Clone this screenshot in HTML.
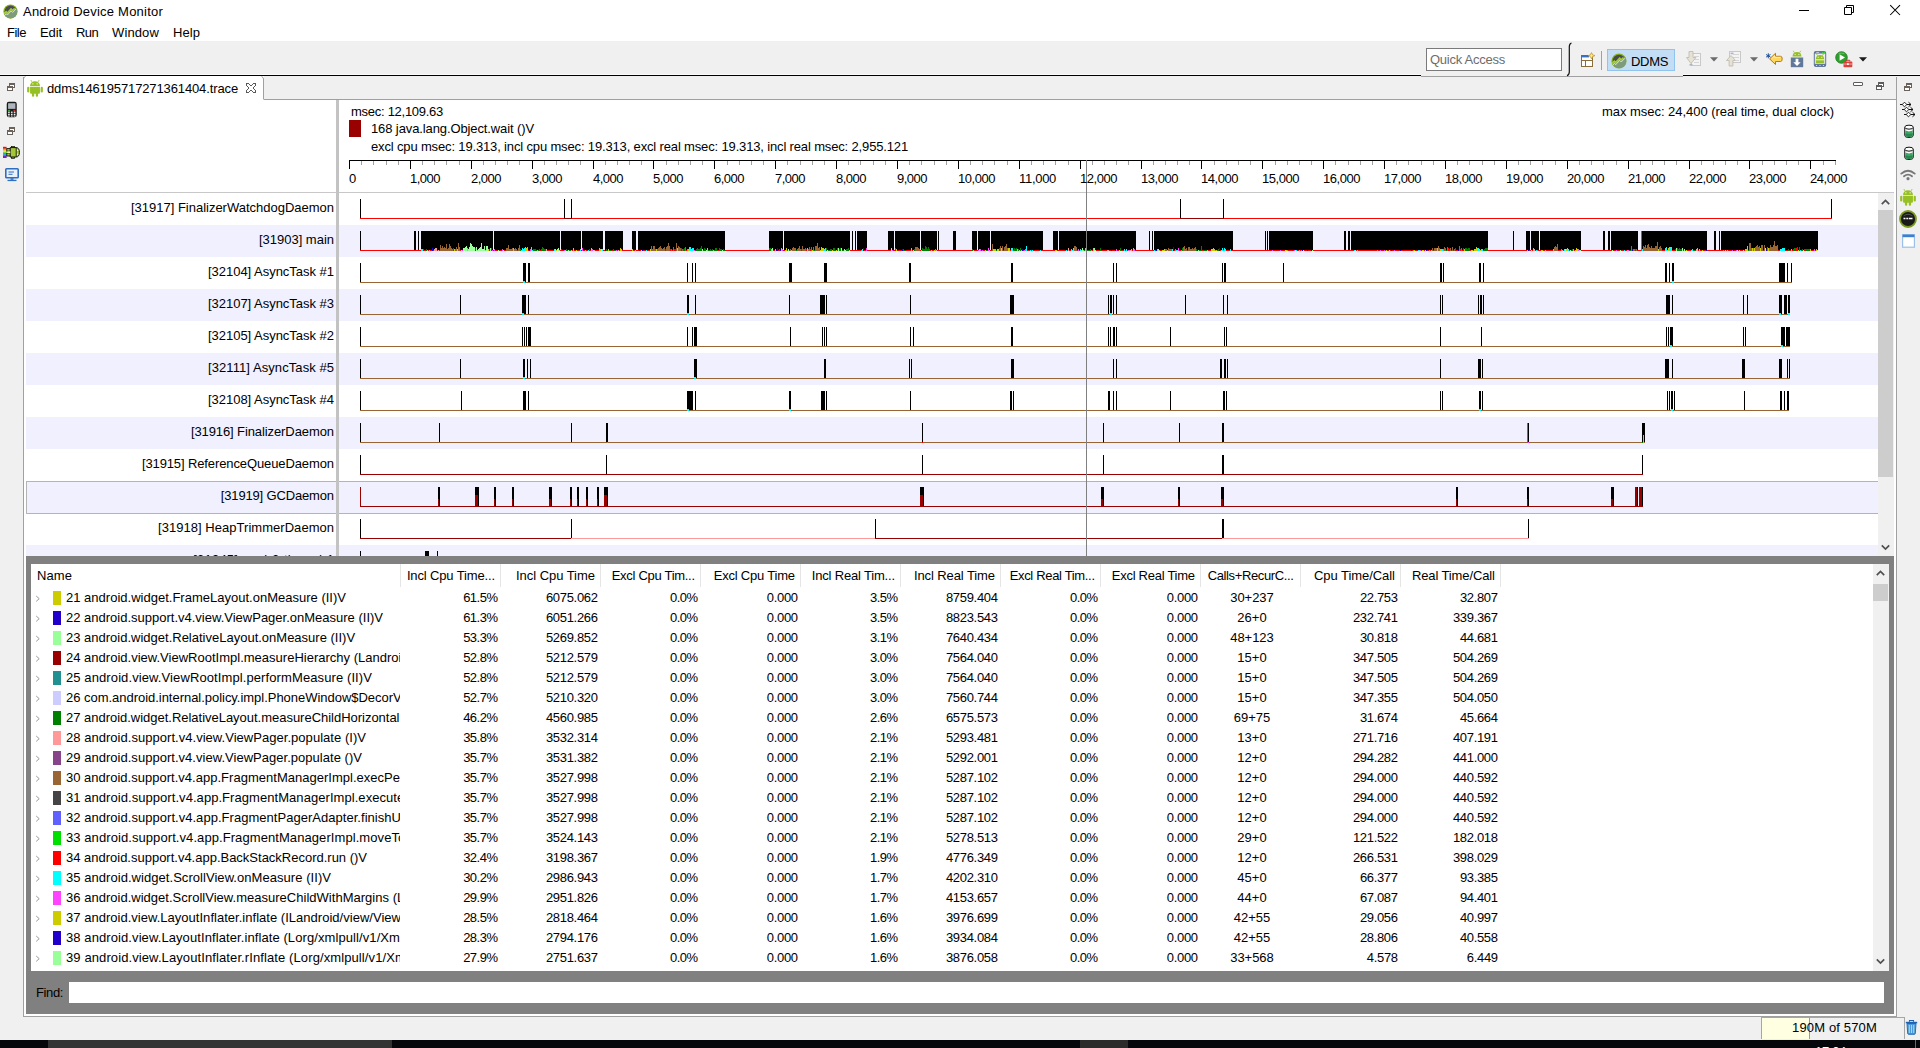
<!DOCTYPE html><html lang="en"><head><meta charset="utf-8"><title>Android Device Monitor</title><style>

html,body{margin:0;padding:0;background:#fff;}
body{width:1920px;height:1048px;overflow:hidden;position:relative;font-family:"Liberation Sans",sans-serif;font-size:13px;line-height:16px;color:#000;}
#app,#app>section{position:absolute;left:0;top:0;width:1920px;height:1048px;overflow:hidden;}
#app>section>div,#app>section>svg,#app>section>span,#labclip>span{position:absolute;}
.t{white-space:pre;display:block;}

</style></head><body><div id="app">
<section id="chrome" aria-label="window background">
<div style="left:0px;top:41px;width:1920px;height:36px;background:#f0f0f0;"></div>
<div style="left:0px;top:77px;width:1920px;height:23px;background:#f0f0f0;"></div>
<div style="left:0px;top:77px;width:24px;height:963px;background:#f0f0f0;"></div>
<div style="left:1897px;top:77px;width:23px;height:963px;background:#f0f0f0;"></div>
<div style="left:0px;top:1017px;width:1920px;height:23px;background:#f0f0f0;"></div>
<div style="left:0px;top:75px;width:1421px;height:1px;background:#000;"></div>
<div style="left:1683px;top:75px;width:237px;height:1px;background:#000;"></div>


</section>
<section id="titlebar" aria-label="title bar">

<svg style="left:3px;top:4px" width="15" height="15" viewBox="0 0 16 16" ><defs><clipPath id="c3"><circle cx="8" cy="8" r="7.2"/></clipPath></defs><circle cx="8" cy="8" r="7.6" fill="#86b01c"/><g clip-path="url(#c3)"><circle cx="8" cy="8" r="6.3" fill="#4a4a50"/><path d="M0 11.5 L3.3 8.2 L4.6 9.6 L8.6 5.2 L10.2 6.9 L16 1.5 L16 16 L0 16Z" fill="#7e9c7c"/><path d="M0.5 11.2 L3.3 8.2 L4.6 9.6 L8.6 5.2 L10.2 6.9 L12.5 4.6" fill="none" stroke="#a4cc39" stroke-width="1.7"/><path d="M1.5 12.6 L3.4 10.4 L4.7 11.7 L8.6 7.4 L10.2 9.0 L14 5.2" fill="none" stroke="#e9f0e6" stroke-width="0.8"/></g></svg>
<svg style="left:1799px;top:10px" width="10" height="1" viewBox="0 0 10 1" ><rect width="10" height="1" fill="#000"/></svg>
<svg style="left:1843px;top:4px" width="12" height="12" viewBox="0 0 12 12" ><path d="M3.5 3.5V1.5H10.5V8.5H8.5M1.5 3.5H8.5V10.5H1.5Z" fill="none" stroke="#000" stroke-width="1"/></svg>
<svg style="left:1889px;top:4px" width="13" height="13" viewBox="0 0 13 13" ><path d="M1.200 1.200L11 11M11 1.200L1.200 11" fill="none" stroke="#000" stroke-width="1.050"/></svg>
<span class="t" style="top:4px;left:23px;letter-spacing:0.222px;">Android Device Monitor</span>
</section>
<section id="menubar" aria-label="menu bar">


<span class="t" style="top:25px;left:7px;letter-spacing:-0.488px;">File</span>
<span class="t" style="top:25px;left:40px;letter-spacing:-0.102px;">Edit</span>
<span class="t" style="top:25px;left:76px;letter-spacing:-0.620px;">Run</span>
<span class="t" style="top:25px;left:112px;letter-spacing:0.125px;">Window</span>
<span class="t" style="top:25px;left:173px;letter-spacing:0.062px;">Help</span>
</section>
<section id="toolbar" aria-label="tool bar">

<div style="left:1421px;top:76px;width:262px;height:1px;background:#a0a0a0;"></div>
<div style="left:0px;top:74px;width:1421px;height:1px;background:#fbfbfb;"></div>
<div style="left:1683px;top:74px;width:237px;height:1px;background:#fbfbfb;"></div>
<div style="left:1426px;top:48px;width:136px;height:23px;background:#fff;border:1px solid #7a7a7a;box-sizing:border-box;"></div>
<svg style="left:1564px;top:42px" width="10" height="35" viewBox="0 0 10 35" ><path d="M7.500 1 Q5.500 1.500 5.300 4.500 V30 Q5.200 33 3 33.600" fill="none" stroke="#111" stroke-width="1.200"/></svg>
<svg style="left:1580px;top:52px" width="16" height="16" viewBox="0 0 16 16" ><rect x="1.5" y="3.5" width="11" height="11" fill="#fff" stroke="#8a6d3b" stroke-width="1"/><rect x="1" y="3" width="8" height="2.4" fill="#3b6fc4"/><path d="M1.5 8.5H12.5M5.5 8.5V14.5" stroke="#8a6d3b" stroke-width="1" fill="none"/><path d="M11.5 0.6 L12.6 2.9 L15 3.6 L12.6 4.6 L11.5 7 L10.4 4.6 L8 3.6 L10.4 2.9Z" fill="#ffe98a" stroke="#c79a1d" stroke-width="0.8"/></svg>
<div style="left:1601px;top:51px;width:1px;height:19px;background:#a0a0a0;"></div>
<div style="left:1607px;top:49px;width:68px;height:22px;background:#c3ddf4;border:1px solid #90c3ee;box-sizing:border-box;"></div>
<svg style="left:1611px;top:53px" width="16" height="16" viewBox="0 0 16 16" ><defs><clipPath id="c1611"><circle cx="8" cy="8" r="7.2"/></clipPath></defs><circle cx="8" cy="8" r="7.6" fill="#86b01c"/><g clip-path="url(#c1611)"><circle cx="8" cy="8" r="6.3" fill="#4a4a50"/><path d="M0 11.5 L3.3 8.2 L4.6 9.6 L8.6 5.2 L10.2 6.9 L16 1.5 L16 16 L0 16Z" fill="#7e9c7c"/><path d="M0.5 11.2 L3.3 8.2 L4.6 9.6 L8.6 5.2 L10.2 6.9 L12.5 4.6" fill="none" stroke="#a4cc39" stroke-width="1.7"/><path d="M1.5 12.6 L3.4 10.4 L4.7 11.7 L8.6 7.4 L10.2 9.0 L14 5.2" fill="none" stroke="#e9f0e6" stroke-width="0.8"/></g></svg>
<svg style="left:1686px;top:50px" width="16" height="18" viewBox="0 0 16 18" ><rect x="5.5" y="3.5" width="9" height="12" fill="#f4f4f4" stroke="#c9c9c9"/><path d="M8 6.5h5M8 9.5h5M8 12.5h5" stroke="#d5d5d5"/><path d="M3 1.5h4v6h3L5 13.5L0.5 7.5h2.5Z" fill="#e6e2d6" stroke="#bdb8a8" stroke-width="0.8"/><rect x="3.5" y="14" width="3" height="1.6" fill="#aab4c6"/></svg>
<svg style="left:1710px;top:57px" width="8" height="5" viewBox="0 0 8 5" ><path d="M0 0.3H8L4 4.6Z" fill="#6b6b6b"/></svg>
<svg style="left:1726px;top:50px" width="16" height="18" viewBox="0 0 16 18" ><rect x="3.5" y="1.5" width="11" height="11" fill="#f4f4f4" stroke="#c9c9c9"/><path d="M7 4.5h6M7 7.5h6M10 10.500h3" stroke="#d5d5d5"/><rect x="4.5" y="2.6" width="3" height="1.6" fill="#aab4c6"/><path d="M5 5.5L9.5 10.500h-2.6v5.5h-3.800v-5.500h-2.600Z" fill="#e6e2d6" stroke="#bdb8a8" stroke-width="0.8"/></svg>
<svg style="left:1750px;top:57px" width="8" height="5" viewBox="0 0 8 5" ><path d="M0 0.3H8L4 4.6Z" fill="#6b6b6b"/></svg>
<svg style="left:1765px;top:51px" width="18" height="15" viewBox="0 0 18 15" ><path d="M4.600 7.900L10.500 2.300V5.300H15.600Q17.200 5.300 17.200 7.900Q17.200 10.500 15.600 10.500H10.500V13.500Z" fill="#ffd65c" stroke="#b8790f" stroke-width="1" stroke-linejoin="round"/><path d="M7 7.400L9.700 4.800V6.300H15.400" fill="none" stroke="#fff3c4" stroke-width="0.900"/><path d="M3.300 2.300V7.300M1.100 3.500L5.500 6.100M5.500 3.500L1.100 6.100" stroke="#1d4f9c" stroke-width="1" fill="none"/></svg>
<svg style="left:1790px;top:50px" width="14" height="18" viewBox="0 0 14 18" ><path d="M2.5 6.5 A4.5 4.5 0 0 1 11.5 6.5Z" fill="#97c024"/><path d="M4.525 2.8L3.1750000000000003 0.8M9.475 2.8L10.825 0.8" stroke="#97c024" stroke-width="0.8"/><circle cx="5.11" cy="4.475" r="0.55" fill="#fff"/><circle cx="8.89" cy="4.475" r="0.55" fill="#fff"/><rect x="0.8" y="7.500" width="12.400" height="9.700" fill="#60789a"/><path d="M5.600 8.800h2.800v3.400h2.300L7 16L3.300 12.200h2.300Z" fill="#fff"/></svg>
<svg style="left:1813px;top:50px" width="14" height="18" viewBox="0 0 14 18" ><rect x="0.800" y="1" width="12.400" height="16" rx="2" fill="#60789a"/><rect x="1.800" y="3.600" width="10.400" height="10.200" fill="#e8eef4"/><path d="M2.8 9.2 A4.2 4.2 0 0 1 11.2 9.2Z" fill="#97c024"/><path d="M4.6899999999999995 5.8L3.43 3.8M9.31 5.8L10.57 3.8" stroke="#97c024" stroke-width="0.8"/><circle cx="5.236" cy="7.3100000000000005" r="0.55" fill="#fff"/><circle cx="8.764" cy="7.3100000000000005" r="0.55" fill="#fff"/><rect x="2.800" y="9.800" width="8.400" height="3.400" fill="#97c024"/><rect x="2.800" y="9.600" width="8.400" height="0.700" fill="#e8eef4"/><circle cx="9.800" cy="2.300" r="0.600" fill="#3fdc3f"/><circle cx="11.400" cy="2.300" r="0.600" fill="#3fdc3f"/><rect x="3.200" y="1.900" width="3" height="0.800" fill="#dfe6ee"/><circle cx="3.600" cy="15.500" r="0.600" fill="#e8eef4"/><circle cx="7" cy="15.500" r="0.600" fill="#e8eef4"/><circle cx="10.400" cy="15.500" r="0.600" fill="#e8eef4"/></svg>
<svg style="left:1835px;top:51px" width="18" height="17" viewBox="0 0 18 17" ><circle cx="6.500" cy="6.500" r="5.800" fill="#2f9e2f" stroke="#1e7a1e" stroke-width="0.8"/><path d="M3 3.200A5 5 0 0 1 10 3.200A7 7 0 0 0 3 3.200Z" fill="#9fe09f"/><path d="M4.600 3.300L10 6.500L4.600 9.700Z" fill="#fff"/><rect x="8.500" y="10.500" width="8.800" height="5.800" rx="0.800" fill="#d9423c"/><path d="M11 10.500V9.300h3.800v1.200" fill="none" stroke="#c23a34" stroke-width="1"/><rect x="8.500" y="12.600" width="8.800" height="0.900" fill="#f3b3ae"/><rect x="12" y="12.200" width="1.800" height="1.800" fill="#fff"/></svg>
<svg style="left:1859px;top:57px" width="8" height="5" viewBox="0 0 8 5" ><path d="M0 0.3H8L4 4.6Z" fill="#1a1a1a"/></svg>
<span class="t" style="top:52px;left:1430px;letter-spacing:-0.253px;color:#6d6d6d;">Quick Access</span>
<span class="t" style="top:54px;left:1631px;letter-spacing:-0.320px;">DDMS</span>
</section>
<section id="viewstack" aria-label="editor tab folder">
<div style="left:23px;top:77px;width:1px;height:940px;background:#a0a0a0;"></div>
<div style="left:1896px;top:77px;width:1px;height:940px;background:#a0a0a0;"></div>
<div style="left:23px;top:1016px;width:1874px;height:1px;background:#a0a0a0;"></div>
<div style="left:263px;top:99px;width:1633px;height:1px;background:#a0a0a0;"></div>
<div style="left:263px;top:79px;width:1px;height:21px;background:#a0a0a0;"></div>
<div style="left:24px;top:76px;width:240px;height:24px;background:#fff;"></div>
<div style="left:24px;top:100px;width:1872px;height:456px;background:#fff;"></div>
<svg style="left:23px;top:76px" width="241" height="24" viewBox="0 0 241 24" ><path d="M0.500 24V3Q0.500 1.200 2.500 0.500M238.500 0.500Q240.500 1.200 240.500 3V23.500" fill="none" stroke="#a0a0a0" stroke-width="1"/></svg>
<svg style="left:26px;top:79px" width="18" height="18" viewBox="0 0 16 16" ><path d="M3.600 6.200A4.400 4.300 0 0 1 12.400 6.200Z" fill="#97c024"/><path d="M5.300 2.600L4.300 0.900M10.700 2.600L11.700 0.900" stroke="#97c024" stroke-width="0.700"/><circle cx="6.100" cy="4.300" r="0.600" fill="#fff"/><circle cx="9.900" cy="4.300" r="0.600" fill="#fff"/><path d="M3.600 6.900H12.400V12.300Q12.400 13.200 11.500 13.200H4.500Q3.600 13.200 3.600 12.300Z" fill="#97c024"/><rect x="1" y="6.800" width="2" height="5.200" rx="1" fill="#97c024"/><rect x="13" y="6.800" width="2" height="5.200" rx="1" fill="#97c024"/><rect x="5.300" y="12" width="2" height="3.800" rx="1" fill="#97c024"/><rect x="8.700" y="12" width="2" height="3.800" rx="1" fill="#97c024"/></svg>
<svg style="left:246px;top:83px" width="10" height="10" viewBox="0 0 10 10" shape-rendering="crispEdges"><path d="M0.500 0.500H2.500L4.500 2.500H5.500L7.500 0.500H9.500V2.500L7.500 4.500V5.500L9.500 7.500V9.500H7.500L5.500 7.500H4.500L2.500 9.500H0.500V7.500L2.500 5.500V4.500L0.500 2.500Z" fill="#fff" stroke="#5a5a5a" stroke-width="1"/></svg>
<svg style="left:1876px;top:82px" width="8" height="8" viewBox="0 0 8 8" ><rect x="2.500" y="0.500" width="5" height="4" fill="#fff" stroke="#5c5c5c" stroke-width="1"/><rect x="2" y="0" width="6" height="2" fill="#5c5c5c"/><rect x="0.500" y="3.500" width="5" height="4" fill="#fff" stroke="#5c5c5c" stroke-width="1"/><rect x="0" y="3" width="6" height="2" fill="#5c5c5c"/></svg>
<svg style="left:1853px;top:82px" width="10" height="4" viewBox="0 0 10 4" ><rect x="0.500" y="0.500" width="9" height="3" rx="0.500" fill="#fff" stroke="#5c5c5c" stroke-width="1"/></svg>
<span class="t" style="top:81px;left:47px;letter-spacing:-0.123px;">ddms146195717271361404.trace</span>
</section>
<section id="trimleft" aria-label="left trim">

<svg style="left:7px;top:83px" width="8" height="8" viewBox="0 0 8 8" ><rect x="2.500" y="0.500" width="5" height="4" fill="#fff" stroke="#6b635b" stroke-width="1"/><rect x="2" y="0" width="6" height="2" fill="#6b635b"/><rect x="0.500" y="3.500" width="5" height="4" fill="#fff" stroke="#6b635b" stroke-width="1"/><rect x="0" y="3" width="6" height="2" fill="#6b635b"/></svg>
<svg style="left:7px;top:127px" width="8" height="8" viewBox="0 0 8 8" ><rect x="2.500" y="0.500" width="5" height="4" fill="#fff" stroke="#6b635b" stroke-width="1"/><rect x="2" y="0" width="6" height="2" fill="#6b635b"/><rect x="0.500" y="3.500" width="5" height="4" fill="#fff" stroke="#6b635b" stroke-width="1"/><rect x="0" y="3" width="6" height="2" fill="#6b635b"/></svg>
<svg style="left:6px;top:100.5px" width="11.5" height="17" viewBox="0 0 11 16" ><rect x="0.700" y="0.700" width="9.600" height="14.600" rx="2" fill="#1a1a1a"/><rect x="2" y="2" width="7" height="5.400" fill="#aeb4bd"/><rect x="2" y="8.300" width="2" height="1" fill="#3fbf3f"/><rect x="7" y="8.300" width="2" height="1" fill="#e03030"/><g fill="#fff"><rect x="2" y="10" width="1.600" height="1.200"/><rect x="4.700" y="10" width="1.600" height="1.200"/><rect x="7.400" y="10" width="1.600" height="1.200"/><rect x="2" y="12" width="1.600" height="1.200"/><rect x="4.700" y="12" width="1.600" height="1.200"/><rect x="7.400" y="12" width="1.600" height="1.200"/><rect x="2" y="13.800" width="1.600" height="0.900"/><rect x="4.700" y="13.800" width="1.600" height="0.900"/><rect x="7.400" y="13.800" width="1.600" height="0.900"/></g></svg>
<svg style="left:3px;top:146px" width="17" height="13" viewBox="0 0 17 13" ><rect x="0" y="0.800" width="3.600" height="2" fill="#e11"/><rect x="0" y="2.800" width="4.200" height="1.800" fill="#f90"/><rect x="0" y="4.600" width="4.600" height="1.800" fill="#ee0"/><rect x="0" y="6.400" width="4.600" height="1.800" fill="#2c2"/><rect x="0" y="8.200" width="4.200" height="1.800" fill="#19e"/><rect x="0" y="10" width="3.600" height="2" fill="#72c"/><rect x="3.800" y="2.600" width="4.500" height="2.600" fill="#a4c639" stroke="#111" stroke-width="0.900"/><rect x="3.800" y="7.400" width="4.500" height="2.600" fill="#a4c639" stroke="#111" stroke-width="0.900"/><rect x="8.400" y="0.300" width="3.200" height="2" fill="#a4c639" stroke="#111" stroke-width="0.800"/><rect x="8.400" y="10.300" width="3.200" height="2" fill="#a4c639" stroke="#111" stroke-width="0.800"/><path d="M7.200 1.600H13Q16.400 1.600 16.400 6.300Q16.400 11 13 11H7.200Z" fill="#a4c639" stroke="#111" stroke-width="1"/><path d="M13.200 1.900V10.700" stroke="#111" stroke-width="0.800"/><circle cx="14.700" cy="4.300" r="0.700" fill="#fff"/><circle cx="14.700" cy="8.300" r="0.700" fill="#fff"/><rect x="4.300" y="5.300" width="3" height="2" fill="#f6f0b0"/></svg>
<svg style="left:5px;top:168px" width="14" height="14" viewBox="0 0 14 14" ><rect x="0.800" y="0.800" width="12.400" height="9" rx="0.800" fill="#e9f1fb" stroke="#2f6fc0" stroke-width="1.600"/><path d="M3.500 4h5.500M3.500 6.300h4" stroke="#2f6fc0" stroke-width="1"/><rect x="5.500" y="10.200" width="3" height="1.600" fill="#2f6fc0"/><rect x="2.500" y="11.800" width="9" height="1.300" fill="#2f6fc0"/></svg>

</section>
<section id="trimright" aria-label="right trim">

<svg style="left:1904px;top:83px" width="8" height="8" viewBox="0 0 8 8" ><rect x="2.500" y="0.500" width="5" height="4" fill="#fff" stroke="#6b635b" stroke-width="1"/><rect x="2" y="0" width="6" height="2" fill="#6b635b"/><rect x="0.500" y="3.500" width="5" height="4" fill="#fff" stroke="#6b635b" stroke-width="1"/><rect x="0" y="3" width="6" height="2" fill="#6b635b"/></svg>
<svg style="left:1900px;top:101px" width="16" height="17" viewBox="0 0 16 17" ><path d="M0 3.5H11M8.5 1.2000000000000002L11 3.5L8.5 5.8" fill="none" stroke="#111" stroke-width="1"/><path d="M4.5 1.2000000000000002L6.8 3.5L4.5 5.8L2.2 3.5Z" fill="#fff" stroke="#111" stroke-width="0.900"/><path d="M2 8.5H13M10.5 6.2L13 8.5L10.5 10.8" fill="none" stroke="#111" stroke-width="1"/><path d="M6.5 6.2L8.8 8.5L6.5 10.8L4.2 8.5Z" fill="#fff" stroke="#111" stroke-width="0.900"/><path d="M4 13.5H15M12.5 11.2L15 13.5L12.5 15.8" fill="none" stroke="#111" stroke-width="1"/><path d="M8.5 11.2L10.8 13.5L8.5 15.8L6.2 13.5Z" fill="#fff" stroke="#111" stroke-width="0.900"/></svg>
<svg style="left:1903.5px;top:124px" width="10" height="14.5" viewBox="0 0 11 15" ><path d="M0.800 3V12Q0.800 14.300 5.500 14.300Q10.200 14.300 10.200 12V3" fill="#fff" stroke="#111" stroke-width="1.100"/><path d="M1.400 6.800Q5.500 8.600 9.600 6.800V12Q9.600 13.700 5.500 13.700Q1.400 13.700 1.400 12Z" fill="#3aa865"/><path d="M1.400 9.800Q5.500 11.500 9.600 9.800V12Q9.600 13.700 5.500 13.700Q1.400 13.700 1.400 12Z" fill="#2c8650"/><ellipse cx="5.500" cy="3" rx="4.700" ry="2.200" fill="#fff" stroke="#111" stroke-width="1.100"/></svg>
<svg style="left:1903.5px;top:146px" width="10" height="14.5" viewBox="0 0 11 15" ><path d="M0.800 3V12Q0.800 14.300 5.500 14.300Q10.200 14.300 10.200 12V3" fill="#fff" stroke="#111" stroke-width="1.100"/><path d="M1.400 6.800Q5.500 8.600 9.600 6.800V12Q9.600 13.700 5.500 13.700Q1.400 13.700 1.400 12Z" fill="#3aa865"/><path d="M1.400 9.800Q5.500 11.500 9.600 9.800V12Q9.600 13.700 5.500 13.700Q1.400 13.700 1.400 12Z" fill="#2c8650"/><ellipse cx="5.500" cy="3" rx="4.700" ry="2.200" fill="#fff" stroke="#111" stroke-width="1.100"/></svg>
<svg style="left:1900px;top:169px" width="16" height="12" viewBox="0 0 16 12" ><g fill="none" stroke="#777" stroke-linecap="round"><path d="M1.300 4.600Q8 -1.300 14.700 4.600" stroke-width="1.900"/><path d="M4 7.300Q8 3.900 12 7.300" stroke-width="1.800"/></g><circle cx="8" cy="9.700" r="1.600" fill="#777"/></svg>
<svg style="left:1899px;top:188px" width="18" height="18" viewBox="0 0 16 16" ><path d="M3.600 6.200A4.400 4.300 0 0 1 12.400 6.200Z" fill="#97c024"/><path d="M5.300 2.600L4.300 0.900M10.700 2.600L11.700 0.900" stroke="#97c024" stroke-width="0.700"/><circle cx="6.100" cy="4.300" r="0.600" fill="#fff"/><circle cx="9.900" cy="4.300" r="0.600" fill="#fff"/><path d="M3.600 6.900H12.400V12.300Q12.400 13.200 11.500 13.200H4.500Q3.600 13.200 3.600 12.300Z" fill="#97c024"/><rect x="1" y="6.800" width="2" height="5.200" rx="1" fill="#97c024"/><rect x="13" y="6.800" width="2" height="5.200" rx="1" fill="#97c024"/><rect x="5.300" y="12" width="2" height="3.800" rx="1" fill="#97c024"/><rect x="8.700" y="12" width="2" height="3.800" rx="1" fill="#97c024"/></svg>
<svg style="left:1899px;top:210px" width="18" height="18" viewBox="0 0 18 18" ><circle cx="9" cy="9" r="8" fill="#1a1a1a" stroke="#7c9a1e" stroke-width="1.800"/><path d="M4 6.500A6 6 0 0 1 14 6.500A9 9 0 0 0 4 6.500Z" fill="#555"/><path d="M4.500 8.500h2M7.300 8.500h2M10 8.500h3.500" stroke="#fff" stroke-width="1.500"/></svg>
<svg style="left:1902px;top:234px" width="13" height="14" viewBox="0 0 13 14" ><rect x="0.600" y="0.600" width="11.800" height="12.600" fill="#fff" stroke="#9cc0ea" stroke-width="1.200"/><rect x="0.600" y="0.600" width="11.800" height="2.600" fill="#3d7ed0"/></svg>

</section>
<section id="timeline" aria-label="traceview timeline">
<div style="left:349px;top:120px;width:12px;height:17px;background:#990000;"></div>
<div style="left:26px;top:192px;width:1868px;height:1px;background:#c8c8c8;"></div>
<div style="left:26px;top:225px;width:1852px;height:32px;background:#f0f0ff;"></div>
<div style="left:26px;top:289px;width:1852px;height:32px;background:#f0f0ff;"></div>
<div style="left:26px;top:353px;width:1852px;height:32px;background:#f0f0ff;"></div>
<div style="left:26px;top:417px;width:1852px;height:32px;background:#f0f0ff;"></div>
<div style="left:26px;top:481px;width:1852px;height:32px;background:#f0f0ff;"></div>
<div style="left:26px;top:545px;width:1852px;height:11px;background:#f0f0ff;"></div>
<div style="left:26px;top:481px;width:1852px;height:1px;background:#b4b4b4;"></div>
<div style="left:26px;top:513px;width:1852px;height:1px;background:#b4b4b4;"></div>
<div style="left:26px;top:481px;width:1px;height:33px;background:#b4b4b4;"></div>
<div style="left:336px;top:100px;width:3px;height:456px;background:#c3c3c3;"></div>
<div style="left:1878px;top:193px;width:16px;height:363px;background:#f0f0f0;"></div>
<div style="left:1878px;top:210px;width:15px;height:267px;background:#cdcdcd;"></div>
<svg style="left:0;top:0" width="1920" height="556" viewBox="0 0 1920 556" shape-rendering="crispEdges"><rect x="349" y="160" width="1487" height="1" fill="#000"/><rect x="349" y="160" width="1" height="9" fill="#000"/><rect x="361" y="161" width="1" height="4" fill="#a0a0a0"/><rect x="373" y="161" width="1" height="4" fill="#a0a0a0"/><rect x="386" y="161" width="1" height="4" fill="#a0a0a0"/><rect x="398" y="161" width="1" height="4" fill="#a0a0a0"/><rect x="410" y="160" width="1" height="9" fill="#000"/><rect x="422" y="161" width="1" height="4" fill="#a0a0a0"/><rect x="434" y="161" width="1" height="4" fill="#a0a0a0"/><rect x="446" y="161" width="1" height="4" fill="#a0a0a0"/><rect x="459" y="161" width="1" height="4" fill="#a0a0a0"/><rect x="471" y="160" width="1" height="9" fill="#000"/><rect x="483" y="161" width="1" height="4" fill="#a0a0a0"/><rect x="495" y="161" width="1" height="4" fill="#a0a0a0"/><rect x="507" y="161" width="1" height="4" fill="#a0a0a0"/><rect x="519" y="161" width="1" height="4" fill="#a0a0a0"/><rect x="532" y="160" width="1" height="9" fill="#000"/><rect x="544" y="161" width="1" height="4" fill="#a0a0a0"/><rect x="556" y="161" width="1" height="4" fill="#a0a0a0"/><rect x="568" y="161" width="1" height="4" fill="#a0a0a0"/><rect x="580" y="161" width="1" height="4" fill="#a0a0a0"/><rect x="593" y="160" width="1" height="9" fill="#000"/><rect x="605" y="161" width="1" height="4" fill="#a0a0a0"/><rect x="617" y="161" width="1" height="4" fill="#a0a0a0"/><rect x="629" y="161" width="1" height="4" fill="#a0a0a0"/><rect x="641" y="161" width="1" height="4" fill="#a0a0a0"/><rect x="653" y="160" width="1" height="9" fill="#000"/><rect x="666" y="161" width="1" height="4" fill="#a0a0a0"/><rect x="678" y="161" width="1" height="4" fill="#a0a0a0"/><rect x="690" y="161" width="1" height="4" fill="#a0a0a0"/><rect x="702" y="161" width="1" height="4" fill="#a0a0a0"/><rect x="714" y="160" width="1" height="9" fill="#000"/><rect x="727" y="161" width="1" height="4" fill="#a0a0a0"/><rect x="739" y="161" width="1" height="4" fill="#a0a0a0"/><rect x="751" y="161" width="1" height="4" fill="#a0a0a0"/><rect x="763" y="161" width="1" height="4" fill="#a0a0a0"/><rect x="775" y="160" width="1" height="9" fill="#000"/><rect x="787" y="161" width="1" height="4" fill="#a0a0a0"/><rect x="800" y="161" width="1" height="4" fill="#a0a0a0"/><rect x="812" y="161" width="1" height="4" fill="#a0a0a0"/><rect x="824" y="161" width="1" height="4" fill="#a0a0a0"/><rect x="836" y="160" width="1" height="9" fill="#000"/><rect x="848" y="161" width="1" height="4" fill="#a0a0a0"/><rect x="860" y="161" width="1" height="4" fill="#a0a0a0"/><rect x="873" y="161" width="1" height="4" fill="#a0a0a0"/><rect x="885" y="161" width="1" height="4" fill="#a0a0a0"/><rect x="897" y="160" width="1" height="9" fill="#000"/><rect x="909" y="161" width="1" height="4" fill="#a0a0a0"/><rect x="921" y="161" width="1" height="4" fill="#a0a0a0"/><rect x="934" y="161" width="1" height="4" fill="#a0a0a0"/><rect x="946" y="161" width="1" height="4" fill="#a0a0a0"/><rect x="958" y="160" width="1" height="9" fill="#000"/><rect x="970" y="161" width="1" height="4" fill="#a0a0a0"/><rect x="982" y="161" width="1" height="4" fill="#a0a0a0"/><rect x="994" y="161" width="1" height="4" fill="#a0a0a0"/><rect x="1007" y="161" width="1" height="4" fill="#a0a0a0"/><rect x="1019" y="160" width="1" height="9" fill="#000"/><rect x="1031" y="161" width="1" height="4" fill="#a0a0a0"/><rect x="1043" y="161" width="1" height="4" fill="#a0a0a0"/><rect x="1055" y="161" width="1" height="4" fill="#a0a0a0"/><rect x="1068" y="161" width="1" height="4" fill="#a0a0a0"/><rect x="1080" y="160" width="1" height="9" fill="#000"/><rect x="1092" y="161" width="1" height="4" fill="#a0a0a0"/><rect x="1104" y="161" width="1" height="4" fill="#a0a0a0"/><rect x="1116" y="161" width="1" height="4" fill="#a0a0a0"/><rect x="1128" y="161" width="1" height="4" fill="#a0a0a0"/><rect x="1141" y="160" width="1" height="9" fill="#000"/><rect x="1153" y="161" width="1" height="4" fill="#a0a0a0"/><rect x="1165" y="161" width="1" height="4" fill="#a0a0a0"/><rect x="1177" y="161" width="1" height="4" fill="#a0a0a0"/><rect x="1189" y="161" width="1" height="4" fill="#a0a0a0"/><rect x="1201" y="160" width="1" height="9" fill="#000"/><rect x="1214" y="161" width="1" height="4" fill="#a0a0a0"/><rect x="1226" y="161" width="1" height="4" fill="#a0a0a0"/><rect x="1238" y="161" width="1" height="4" fill="#a0a0a0"/><rect x="1250" y="161" width="1" height="4" fill="#a0a0a0"/><rect x="1262" y="160" width="1" height="9" fill="#000"/><rect x="1275" y="161" width="1" height="4" fill="#a0a0a0"/><rect x="1287" y="161" width="1" height="4" fill="#a0a0a0"/><rect x="1299" y="161" width="1" height="4" fill="#a0a0a0"/><rect x="1311" y="161" width="1" height="4" fill="#a0a0a0"/><rect x="1323" y="160" width="1" height="9" fill="#000"/><rect x="1335" y="161" width="1" height="4" fill="#a0a0a0"/><rect x="1348" y="161" width="1" height="4" fill="#a0a0a0"/><rect x="1360" y="161" width="1" height="4" fill="#a0a0a0"/><rect x="1372" y="161" width="1" height="4" fill="#a0a0a0"/><rect x="1384" y="160" width="1" height="9" fill="#000"/><rect x="1396" y="161" width="1" height="4" fill="#a0a0a0"/><rect x="1408" y="161" width="1" height="4" fill="#a0a0a0"/><rect x="1421" y="161" width="1" height="4" fill="#a0a0a0"/><rect x="1433" y="161" width="1" height="4" fill="#a0a0a0"/><rect x="1445" y="160" width="1" height="9" fill="#000"/><rect x="1457" y="161" width="1" height="4" fill="#a0a0a0"/><rect x="1469" y="161" width="1" height="4" fill="#a0a0a0"/><rect x="1482" y="161" width="1" height="4" fill="#a0a0a0"/><rect x="1494" y="161" width="1" height="4" fill="#a0a0a0"/><rect x="1506" y="160" width="1" height="9" fill="#000"/><rect x="1518" y="161" width="1" height="4" fill="#a0a0a0"/><rect x="1530" y="161" width="1" height="4" fill="#a0a0a0"/><rect x="1542" y="161" width="1" height="4" fill="#a0a0a0"/><rect x="1555" y="161" width="1" height="4" fill="#a0a0a0"/><rect x="1567" y="160" width="1" height="9" fill="#000"/><rect x="1579" y="161" width="1" height="4" fill="#a0a0a0"/><rect x="1591" y="161" width="1" height="4" fill="#a0a0a0"/><rect x="1603" y="161" width="1" height="4" fill="#a0a0a0"/><rect x="1616" y="161" width="1" height="4" fill="#a0a0a0"/><rect x="1628" y="160" width="1" height="9" fill="#000"/><rect x="1640" y="161" width="1" height="4" fill="#a0a0a0"/><rect x="1652" y="161" width="1" height="4" fill="#a0a0a0"/><rect x="1664" y="161" width="1" height="4" fill="#a0a0a0"/><rect x="1676" y="161" width="1" height="4" fill="#a0a0a0"/><rect x="1689" y="160" width="1" height="9" fill="#000"/><rect x="1701" y="161" width="1" height="4" fill="#a0a0a0"/><rect x="1713" y="161" width="1" height="4" fill="#a0a0a0"/><rect x="1725" y="161" width="1" height="4" fill="#a0a0a0"/><rect x="1737" y="161" width="1" height="4" fill="#a0a0a0"/><rect x="1749" y="160" width="1" height="9" fill="#000"/><rect x="1762" y="161" width="1" height="4" fill="#a0a0a0"/><rect x="1774" y="161" width="1" height="4" fill="#a0a0a0"/><rect x="1786" y="161" width="1" height="4" fill="#a0a0a0"/><rect x="1798" y="161" width="1" height="4" fill="#a0a0a0"/><rect x="1810" y="160" width="1" height="9" fill="#000"/><rect x="1823" y="161" width="1" height="4" fill="#a0a0a0"/><rect x="1835" y="161" width="1" height="4" fill="#a0a0a0"/><rect x="360" y="218" width="1472" height="1" fill="#ff0000"/><rect x="564" y="218" width="8" height="1" fill="#990000"/><rect x="1180" y="218" width="44" height="1" fill="#990000"/><rect x="360" y="199" width="1" height="19" fill="#000"/><rect x="564" y="199" width="1" height="19" fill="#000"/><rect x="571" y="199" width="1" height="19" fill="#000"/><rect x="1180" y="199" width="1" height="19" fill="#000"/><rect x="1223" y="199" width="1" height="19" fill="#000"/><rect x="1831" y="199" width="1" height="19" fill="#000"/><rect x="360" y="250" width="1458" height="1" fill="#ff0000"/><rect x="360" y="231" width="1" height="19" fill="#000"/><rect x="414" y="231" width="2" height="19" fill="#000"/><rect x="418" y="231" width="1" height="19" fill="#000"/><rect x="421" y="231" width="72" height="19" fill="#000"/><rect x="494" y="231" width="66" height="19" fill="#000"/><rect x="561" y="231" width="20" height="19" fill="#000"/><rect x="582" y="231" width="21" height="19" fill="#000"/><rect x="605" y="231" width="18" height="19" fill="#000"/><rect x="632" y="231" width="4" height="19" fill="#000"/><rect x="638" y="231" width="87" height="19" fill="#000"/><rect x="769" y="231" width="14" height="19" fill="#000"/><rect x="784" y="231" width="66" height="19" fill="#000"/><rect x="852" y="231" width="1" height="19" fill="#000"/><rect x="855" y="231" width="1" height="19" fill="#000"/><rect x="857" y="231" width="10" height="19" fill="#000"/><rect x="888" y="231" width="6" height="19" fill="#000"/><rect x="895" y="231" width="25" height="19" fill="#000"/><rect x="921" y="231" width="16" height="19" fill="#000"/><rect x="938" y="231" width="1" height="19" fill="#000"/><rect x="953" y="231" width="3" height="19" fill="#000"/><rect x="972" y="231" width="5" height="19" fill="#000"/><rect x="978" y="231" width="12" height="19" fill="#000"/><rect x="991" y="231" width="52" height="19" fill="#000"/><rect x="1053" y="231" width="5" height="19" fill="#000"/><rect x="1059" y="231" width="77" height="19" fill="#000"/><rect x="1149" y="231" width="1" height="19" fill="#000"/><rect x="1152" y="231" width="1" height="19" fill="#000"/><rect x="1154" y="231" width="79" height="19" fill="#000"/><rect x="1265" y="231" width="1" height="19" fill="#000"/><rect x="1267" y="231" width="1" height="19" fill="#000"/><rect x="1269" y="231" width="44" height="19" fill="#000"/><rect x="1344" y="231" width="2" height="19" fill="#000"/><rect x="1348" y="231" width="2" height="19" fill="#000"/><rect x="1351" y="231" width="137" height="19" fill="#000"/><rect x="1513" y="231" width="1" height="19" fill="#000"/><rect x="1526" y="231" width="4" height="19" fill="#000"/><rect x="1531" y="231" width="8" height="19" fill="#000"/><rect x="1540" y="231" width="41" height="19" fill="#000"/><rect x="1603" y="231" width="2" height="19" fill="#000"/><rect x="1608" y="231" width="2" height="19" fill="#000"/><rect x="1611" y="231" width="27" height="19" fill="#000"/><rect x="1642" y="231" width="65" height="19" fill="#000"/><rect x="1714" y="231" width="2" height="19" fill="#000"/><rect x="1719" y="231" width="1" height="19" fill="#000"/><rect x="1721" y="231" width="97" height="19" fill="#000"/><rect x="1641" y="231" width="1" height="20" fill="#996633"/><rect x="421" y="249" width="1" height="2" fill="#00ffff"/><rect x="422" y="249" width="1" height="2" fill="#00ffff"/><rect x="423" y="249" width="1" height="2" fill="#008000"/><rect x="424" y="250" width="1" height="1" fill="#ff0000"/><rect x="425" y="250" width="1" height="1" fill="#ff0000"/><rect x="426" y="249" width="1" height="2" fill="#008000"/><rect x="427" y="250" width="1" height="1" fill="#ff9999"/><rect x="428" y="250" width="1" height="1" fill="#ff0000"/><rect x="429" y="250" width="1" height="1" fill="#00ffff"/><rect x="430" y="250" width="1" height="1" fill="#ff0000"/><rect x="431" y="250" width="1" height="1" fill="#ff0000"/><rect x="432" y="248" width="1" height="3" fill="#2200cc"/><rect x="433" y="250" width="1" height="1" fill="#ff0000"/><rect x="434" y="249" width="1" height="2" fill="#ff9999"/><rect x="435" y="248" width="1" height="3" fill="#00ffff"/><rect x="436" y="248" width="1" height="3" fill="#ff9999"/><rect x="437" y="250" width="1" height="1" fill="#ff0000"/><rect x="438" y="250" width="1" height="1" fill="#ff9999"/><rect x="439" y="250" width="1" height="1" fill="#008000"/><rect x="440" y="245" width="1" height="6" fill="#996633"/><rect x="441" y="248" width="1" height="3" fill="#996633"/><rect x="442" y="246" width="1" height="5" fill="#996633"/><rect x="443" y="248" width="1" height="3" fill="#996633"/><rect x="444" y="247" width="1" height="4" fill="#996633"/><rect x="445" y="248" width="1" height="3" fill="#996633"/><rect x="446" y="244" width="1" height="7" fill="#996633"/><rect x="447" y="249" width="1" height="2" fill="#996633"/><rect x="448" y="248" width="1" height="3" fill="#996633"/><rect x="449" y="244" width="1" height="7" fill="#996633"/><rect x="450" y="246" width="1" height="5" fill="#996633"/><rect x="451" y="248" width="1" height="3" fill="#996633"/><rect x="452" y="249" width="1" height="2" fill="#996633"/><rect x="453" y="248" width="1" height="3" fill="#008000"/><rect x="454" y="249" width="1" height="2" fill="#cccc00"/><rect x="455" y="249" width="1" height="2" fill="#996633"/><rect x="456" y="247" width="1" height="4" fill="#996633"/><rect x="457" y="249" width="1" height="2" fill="#cccc00"/><rect x="458" y="243" width="1" height="8" fill="#996633"/><rect x="459" y="247" width="1" height="4" fill="#996633"/><rect x="460" y="250" width="1" height="1" fill="#ff0000"/><rect x="461" y="250" width="1" height="1" fill="#99ff99"/><rect x="462" y="250" width="1" height="1" fill="#ff40ff"/><rect x="463" y="248" width="1" height="3" fill="#99ff99"/><rect x="464" y="248" width="1" height="3" fill="#99ff99"/><rect x="465" y="247" width="1" height="4" fill="#99ff99"/><rect x="466" y="246" width="1" height="5" fill="#99ff99"/><rect x="467" y="248" width="1" height="3" fill="#cccc00"/><rect x="468" y="249" width="1" height="2" fill="#99ff99"/><rect x="469" y="247" width="1" height="4" fill="#99ff99"/><rect x="470" y="243" width="1" height="8" fill="#99ff99"/><rect x="471" y="244" width="1" height="7" fill="#99ff99"/><rect x="472" y="246" width="1" height="5" fill="#99ff99"/><rect x="473" y="247" width="1" height="4" fill="#99ff99"/><rect x="474" y="247" width="1" height="4" fill="#99ff99"/><rect x="475" y="248" width="1" height="3" fill="#008000"/><rect x="476" y="247" width="1" height="4" fill="#99ff99"/><rect x="477" y="250" width="1" height="1" fill="#cccc00"/><rect x="478" y="249" width="1" height="2" fill="#99ff99"/><rect x="479" y="248" width="1" height="3" fill="#99ff99"/><rect x="480" y="247" width="1" height="4" fill="#99ff99"/><rect x="481" y="243" width="1" height="8" fill="#99ff99"/><rect x="482" y="249" width="1" height="2" fill="#99ff99"/><rect x="483" y="249" width="1" height="2" fill="#99ff99"/><rect x="484" y="246" width="1" height="5" fill="#99ff99"/><rect x="485" y="250" width="1" height="1" fill="#cccc00"/><rect x="486" y="246" width="1" height="5" fill="#99ff99"/><rect x="487" y="246" width="1" height="5" fill="#99ff99"/><rect x="488" y="249" width="1" height="2" fill="#cccc00"/><rect x="489" y="249" width="1" height="2" fill="#008000"/><rect x="490" y="248" width="1" height="3" fill="#99ff99"/><rect x="491" y="248" width="1" height="3" fill="#008000"/><rect x="492" y="250" width="1" height="1" fill="#ff40ff"/><rect x="494" y="249" width="1" height="2" fill="#ff40ff"/><rect x="495" y="250" width="1" height="1" fill="#ff0000"/><rect x="496" y="250" width="1" height="1" fill="#ff0000"/><rect x="497" y="250" width="1" height="1" fill="#ff0000"/><rect x="498" y="250" width="1" height="1" fill="#99ff99"/><rect x="499" y="250" width="1" height="1" fill="#ff0000"/><rect x="500" y="250" width="1" height="1" fill="#ff0000"/><rect x="501" y="250" width="1" height="1" fill="#ff0000"/><rect x="502" y="249" width="1" height="2" fill="#ff40ff"/><rect x="503" y="250" width="1" height="1" fill="#99ff99"/><rect x="504" y="250" width="1" height="1" fill="#ff0000"/><rect x="505" y="250" width="1" height="1" fill="#ff0000"/><rect x="506" y="248" width="1" height="3" fill="#996633"/><rect x="507" y="248" width="1" height="3" fill="#996633"/><rect x="508" y="245" width="1" height="6" fill="#996633"/><rect x="509" y="249" width="1" height="2" fill="#996633"/><rect x="510" y="249" width="1" height="2" fill="#996633"/><rect x="511" y="249" width="1" height="2" fill="#996633"/><rect x="512" y="248" width="1" height="3" fill="#996633"/><rect x="513" y="248" width="1" height="3" fill="#cccc00"/><rect x="514" y="249" width="1" height="2" fill="#996633"/><rect x="515" y="248" width="1" height="3" fill="#996633"/><rect x="516" y="249" width="1" height="2" fill="#996633"/><rect x="517" y="250" width="1" height="1" fill="#008000"/><rect x="518" y="248" width="1" height="3" fill="#996633"/><rect x="519" y="245" width="1" height="6" fill="#996633"/><rect x="520" y="249" width="1" height="2" fill="#008000"/><rect x="521" y="250" width="1" height="1" fill="#cccc00"/><rect x="522" y="248" width="1" height="3" fill="#00ffff"/><rect x="523" y="249" width="1" height="2" fill="#00ffff"/><rect x="524" y="248" width="1" height="3" fill="#00ffff"/><rect x="525" y="247" width="1" height="4" fill="#00ffff"/><rect x="526" y="248" width="1" height="3" fill="#cccc00"/><rect x="527" y="247" width="1" height="4" fill="#cccc00"/><rect x="528" y="250" width="1" height="1" fill="#ff0000"/><rect x="529" y="250" width="1" height="1" fill="#2200cc"/><rect x="530" y="249" width="1" height="2" fill="#ff40ff"/><rect x="531" y="247" width="1" height="4" fill="#cccc00"/><rect x="532" y="250" width="1" height="1" fill="#00ffff"/><rect x="533" y="249" width="1" height="2" fill="#008000"/><rect x="534" y="249" width="1" height="2" fill="#008000"/><rect x="535" y="249" width="1" height="2" fill="#008000"/><rect x="536" y="250" width="1" height="1" fill="#008000"/><rect x="537" y="250" width="1" height="1" fill="#cccc00"/><rect x="538" y="250" width="1" height="1" fill="#008000"/><rect x="539" y="249" width="1" height="2" fill="#ff0000"/><rect x="540" y="250" width="1" height="1" fill="#ff0000"/><rect x="541" y="249" width="1" height="2" fill="#008000"/><rect x="542" y="247" width="1" height="4" fill="#008000"/><rect x="543" y="248" width="1" height="3" fill="#008000"/><rect x="544" y="249" width="1" height="2" fill="#008000"/><rect x="545" y="249" width="1" height="2" fill="#008000"/><rect x="546" y="249" width="1" height="2" fill="#ff9999"/><rect x="547" y="250" width="1" height="1" fill="#ff0000"/><rect x="548" y="250" width="1" height="1" fill="#ff0000"/><rect x="549" y="250" width="1" height="1" fill="#ff0000"/><rect x="550" y="250" width="1" height="1" fill="#ff0000"/><rect x="551" y="250" width="1" height="1" fill="#ff0000"/><rect x="552" y="250" width="1" height="1" fill="#ff0000"/><rect x="553" y="250" width="1" height="1" fill="#ff0000"/><rect x="554" y="249" width="1" height="2" fill="#00ffff"/><rect x="555" y="249" width="1" height="2" fill="#99ff99"/><rect x="556" y="250" width="1" height="1" fill="#cccc00"/><rect x="557" y="249" width="1" height="2" fill="#99ff99"/><rect x="558" y="248" width="1" height="3" fill="#99ff99"/><rect x="559" y="250" width="1" height="1" fill="#cccc00"/><rect x="561" y="249" width="1" height="2" fill="#008000"/><rect x="562" y="250" width="1" height="1" fill="#ff0000"/><rect x="563" y="250" width="1" height="1" fill="#ff0000"/><rect x="564" y="250" width="1" height="1" fill="#ff40ff"/><rect x="565" y="250" width="1" height="1" fill="#00ffff"/><rect x="566" y="249" width="1" height="2" fill="#008000"/><rect x="567" y="250" width="1" height="1" fill="#ff0000"/><rect x="568" y="250" width="1" height="1" fill="#99ff99"/><rect x="569" y="250" width="1" height="1" fill="#ff0000"/><rect x="570" y="250" width="1" height="1" fill="#008000"/><rect x="571" y="250" width="1" height="1" fill="#cccc00"/><rect x="572" y="250" width="1" height="1" fill="#ff0000"/><rect x="573" y="248" width="1" height="3" fill="#ff9999"/><rect x="574" y="250" width="1" height="1" fill="#ff0000"/><rect x="575" y="250" width="1" height="1" fill="#008000"/><rect x="576" y="250" width="1" height="1" fill="#cccc00"/><rect x="577" y="250" width="1" height="1" fill="#ff0000"/><rect x="578" y="250" width="1" height="1" fill="#ff0000"/><rect x="579" y="250" width="1" height="1" fill="#ff0000"/><rect x="580" y="249" width="1" height="2" fill="#00ffff"/><rect x="582" y="248" width="1" height="3" fill="#ff40ff"/><rect x="583" y="250" width="1" height="1" fill="#ff0000"/><rect x="584" y="250" width="1" height="1" fill="#ff0000"/><rect x="585" y="250" width="1" height="1" fill="#cccc00"/><rect x="586" y="250" width="1" height="1" fill="#ff0000"/><rect x="587" y="250" width="1" height="1" fill="#008000"/><rect x="588" y="250" width="1" height="1" fill="#00ffff"/><rect x="589" y="249" width="1" height="2" fill="#008000"/><rect x="590" y="250" width="1" height="1" fill="#ff0000"/><rect x="591" y="248" width="1" height="3" fill="#ff9999"/><rect x="592" y="249" width="1" height="2" fill="#ff40ff"/><rect x="593" y="250" width="1" height="1" fill="#99ff99"/><rect x="594" y="250" width="1" height="1" fill="#ff9999"/><rect x="595" y="250" width="1" height="1" fill="#ff0000"/><rect x="596" y="250" width="1" height="1" fill="#ff0000"/><rect x="597" y="250" width="1" height="1" fill="#ff0000"/><rect x="598" y="250" width="1" height="1" fill="#ff0000"/><rect x="599" y="248" width="1" height="3" fill="#00ffff"/><rect x="600" y="249" width="1" height="2" fill="#cccc00"/><rect x="601" y="249" width="1" height="2" fill="#99ff99"/><rect x="602" y="249" width="1" height="2" fill="#00ffff"/><rect x="605" y="250" width="1" height="1" fill="#2200cc"/><rect x="606" y="249" width="1" height="2" fill="#008000"/><rect x="607" y="250" width="1" height="1" fill="#ff0000"/><rect x="608" y="249" width="1" height="2" fill="#cccc00"/><rect x="609" y="250" width="1" height="1" fill="#ff0000"/><rect x="610" y="250" width="1" height="1" fill="#008000"/><rect x="611" y="250" width="1" height="1" fill="#ff0000"/><rect x="612" y="250" width="1" height="1" fill="#ff0000"/><rect x="613" y="249" width="1" height="2" fill="#008000"/><rect x="614" y="250" width="1" height="1" fill="#008000"/><rect x="615" y="250" width="1" height="1" fill="#ff0000"/><rect x="616" y="250" width="1" height="1" fill="#ff40ff"/><rect x="617" y="250" width="1" height="1" fill="#ff0000"/><rect x="618" y="250" width="1" height="1" fill="#ff9999"/><rect x="619" y="250" width="1" height="1" fill="#008000"/><rect x="620" y="248" width="1" height="3" fill="#cccc00"/><rect x="621" y="249" width="1" height="2" fill="#00ffff"/><rect x="622" y="250" width="1" height="1" fill="#ff0000"/><rect x="632" y="249" width="1" height="2" fill="#cccc00"/><rect x="633" y="250" width="1" height="1" fill="#ff0000"/><rect x="634" y="250" width="1" height="1" fill="#ff0000"/><rect x="635" y="250" width="1" height="1" fill="#00ffff"/><rect x="638" y="250" width="1" height="1" fill="#ff0000"/><rect x="639" y="250" width="1" height="1" fill="#2200cc"/><rect x="640" y="250" width="1" height="1" fill="#ff0000"/><rect x="641" y="250" width="1" height="1" fill="#99ff99"/><rect x="642" y="250" width="1" height="1" fill="#2200cc"/><rect x="643" y="250" width="1" height="1" fill="#ff0000"/><rect x="644" y="250" width="1" height="1" fill="#ff0000"/><rect x="645" y="250" width="1" height="1" fill="#ff0000"/><rect x="646" y="250" width="1" height="1" fill="#00ffff"/><rect x="647" y="250" width="1" height="1" fill="#ff0000"/><rect x="648" y="250" width="1" height="1" fill="#ff0000"/><rect x="649" y="250" width="1" height="1" fill="#ff0000"/><rect x="650" y="249" width="1" height="2" fill="#cccc00"/><rect x="651" y="246" width="1" height="5" fill="#996633"/><rect x="652" y="249" width="1" height="2" fill="#996633"/><rect x="653" y="246" width="1" height="5" fill="#996633"/><rect x="654" y="246" width="1" height="5" fill="#996633"/><rect x="655" y="249" width="1" height="2" fill="#996633"/><rect x="656" y="249" width="1" height="2" fill="#cccc00"/><rect x="657" y="249" width="1" height="2" fill="#996633"/><rect x="658" y="248" width="1" height="3" fill="#996633"/><rect x="659" y="247" width="1" height="4" fill="#996633"/><rect x="660" y="246" width="1" height="5" fill="#996633"/><rect x="661" y="248" width="1" height="3" fill="#996633"/><rect x="662" y="249" width="1" height="2" fill="#996633"/><rect x="663" y="248" width="1" height="3" fill="#996633"/><rect x="664" y="247" width="1" height="4" fill="#996633"/><rect x="665" y="249" width="1" height="2" fill="#008000"/><rect x="666" y="247" width="1" height="4" fill="#996633"/><rect x="667" y="246" width="1" height="5" fill="#996633"/><rect x="668" y="243" width="1" height="8" fill="#996633"/><rect x="669" y="246" width="1" height="5" fill="#996633"/><rect x="670" y="249" width="1" height="2" fill="#ff0000"/><rect x="671" y="249" width="1" height="2" fill="#996633"/><rect x="672" y="250" width="1" height="1" fill="#ff0000"/><rect x="673" y="247" width="1" height="4" fill="#996633"/><rect x="674" y="249" width="1" height="2" fill="#ff0000"/><rect x="675" y="249" width="1" height="2" fill="#ff0000"/><rect x="676" y="243" width="1" height="8" fill="#996633"/><rect x="677" y="248" width="1" height="3" fill="#cccc00"/><rect x="678" y="246" width="1" height="5" fill="#996633"/><rect x="679" y="247" width="1" height="4" fill="#996633"/><rect x="680" y="248" width="1" height="3" fill="#996633"/><rect x="681" y="248" width="1" height="3" fill="#008000"/><rect x="682" y="249" width="1" height="2" fill="#996633"/><rect x="683" y="249" width="1" height="2" fill="#ff0000"/><rect x="684" y="248" width="1" height="3" fill="#008000"/><rect x="685" y="247" width="1" height="4" fill="#996633"/><rect x="686" y="250" width="1" height="1" fill="#ff0000"/><rect x="687" y="249" width="1" height="2" fill="#ff40ff"/><rect x="688" y="249" width="1" height="2" fill="#cccc00"/><rect x="689" y="247" width="1" height="4" fill="#00ffff"/><rect x="690" y="247" width="1" height="4" fill="#00ffff"/><rect x="691" y="249" width="1" height="2" fill="#cccc00"/><rect x="692" y="248" width="1" height="3" fill="#00ffff"/><rect x="693" y="248" width="1" height="3" fill="#00ffff"/><rect x="694" y="250" width="1" height="1" fill="#ff40ff"/><rect x="695" y="250" width="1" height="1" fill="#008000"/><rect x="696" y="249" width="1" height="2" fill="#008000"/><rect x="697" y="248" width="1" height="3" fill="#008000"/><rect x="698" y="249" width="1" height="2" fill="#008000"/><rect x="699" y="249" width="1" height="2" fill="#008000"/><rect x="700" y="248" width="1" height="3" fill="#008000"/><rect x="701" y="246" width="1" height="5" fill="#008000"/><rect x="702" y="249" width="1" height="2" fill="#99ff99"/><rect x="703" y="250" width="1" height="1" fill="#008000"/><rect x="704" y="248" width="1" height="3" fill="#008000"/><rect x="705" y="249" width="1" height="2" fill="#008000"/><rect x="706" y="250" width="1" height="1" fill="#99ff99"/><rect x="707" y="248" width="1" height="3" fill="#cccc00"/><rect x="708" y="250" width="1" height="1" fill="#008000"/><rect x="709" y="250" width="1" height="1" fill="#ff0000"/><rect x="710" y="249" width="1" height="2" fill="#008000"/><rect x="711" y="250" width="1" height="1" fill="#008000"/><rect x="712" y="249" width="1" height="2" fill="#008000"/><rect x="713" y="250" width="1" height="1" fill="#cccc00"/><rect x="714" y="250" width="1" height="1" fill="#008000"/><rect x="715" y="248" width="1" height="3" fill="#008000"/><rect x="716" y="248" width="1" height="3" fill="#008000"/><rect x="717" y="250" width="1" height="1" fill="#008000"/><rect x="718" y="250" width="1" height="1" fill="#ff0000"/><rect x="719" y="248" width="1" height="3" fill="#008000"/><rect x="720" y="249" width="1" height="2" fill="#008000"/><rect x="721" y="249" width="1" height="2" fill="#008000"/><rect x="722" y="250" width="1" height="1" fill="#99ff99"/><rect x="723" y="249" width="1" height="2" fill="#008000"/><rect x="724" y="250" width="1" height="1" fill="#008000"/><rect x="769" y="248" width="1" height="3" fill="#008000"/><rect x="770" y="248" width="1" height="3" fill="#008000"/><rect x="771" y="249" width="1" height="2" fill="#00ffff"/><rect x="772" y="248" width="1" height="3" fill="#99ff99"/><rect x="773" y="250" width="1" height="1" fill="#ff0000"/><rect x="774" y="250" width="1" height="1" fill="#ff0000"/><rect x="775" y="249" width="1" height="2" fill="#00ffff"/><rect x="776" y="250" width="1" height="1" fill="#2200cc"/><rect x="777" y="248" width="1" height="3" fill="#2200cc"/><rect x="778" y="250" width="1" height="1" fill="#ff0000"/><rect x="779" y="249" width="1" height="2" fill="#008000"/><rect x="780" y="250" width="1" height="1" fill="#2200cc"/><rect x="781" y="248" width="1" height="3" fill="#cccc00"/><rect x="782" y="249" width="1" height="2" fill="#ff40ff"/><rect x="784" y="250" width="1" height="1" fill="#ff0000"/><rect x="785" y="250" width="1" height="1" fill="#cccc00"/><rect x="786" y="248" width="1" height="3" fill="#cccc00"/><rect x="787" y="250" width="1" height="1" fill="#ff0000"/><rect x="788" y="249" width="1" height="2" fill="#99ff99"/><rect x="789" y="250" width="1" height="1" fill="#ff0000"/><rect x="790" y="249" width="1" height="2" fill="#996633"/><rect x="791" y="250" width="1" height="1" fill="#cccc00"/><rect x="792" y="248" width="1" height="3" fill="#996633"/><rect x="793" y="247" width="1" height="4" fill="#996633"/><rect x="794" y="248" width="1" height="3" fill="#996633"/><rect x="795" y="248" width="1" height="3" fill="#996633"/><rect x="796" y="250" width="1" height="1" fill="#008000"/><rect x="797" y="249" width="1" height="2" fill="#996633"/><rect x="798" y="248" width="1" height="3" fill="#996633"/><rect x="799" y="246" width="1" height="5" fill="#996633"/><rect x="800" y="249" width="1" height="2" fill="#996633"/><rect x="801" y="249" width="1" height="2" fill="#008000"/><rect x="802" y="246" width="1" height="5" fill="#996633"/><rect x="803" y="249" width="1" height="2" fill="#996633"/><rect x="804" y="249" width="1" height="2" fill="#996633"/><rect x="805" y="248" width="1" height="3" fill="#996633"/><rect x="806" y="249" width="1" height="2" fill="#ff0000"/><rect x="807" y="248" width="1" height="3" fill="#cccc00"/><rect x="808" y="249" width="1" height="2" fill="#996633"/><rect x="809" y="247" width="1" height="4" fill="#996633"/><rect x="810" y="249" width="1" height="2" fill="#ff0000"/><rect x="811" y="247" width="1" height="4" fill="#996633"/><rect x="812" y="250" width="1" height="1" fill="#cccc00"/><rect x="813" y="247" width="1" height="4" fill="#996633"/><rect x="814" y="250" width="1" height="1" fill="#008000"/><rect x="815" y="246" width="1" height="5" fill="#996633"/><rect x="816" y="246" width="1" height="5" fill="#996633"/><rect x="817" y="243" width="1" height="8" fill="#996633"/><rect x="818" y="248" width="1" height="3" fill="#996633"/><rect x="819" y="247" width="1" height="4" fill="#996633"/><rect x="820" y="250" width="1" height="1" fill="#cccc00"/><rect x="821" y="247" width="1" height="4" fill="#00ffff"/><rect x="822" y="248" width="1" height="3" fill="#cccc00"/><rect x="823" y="248" width="1" height="3" fill="#00ffff"/><rect x="824" y="249" width="1" height="2" fill="#00ffff"/><rect x="825" y="248" width="1" height="3" fill="#00ffff"/><rect x="826" y="248" width="1" height="3" fill="#008000"/><rect x="827" y="250" width="1" height="1" fill="#99ff99"/><rect x="828" y="250" width="1" height="1" fill="#008000"/><rect x="829" y="250" width="1" height="1" fill="#008000"/><rect x="830" y="249" width="1" height="2" fill="#008000"/><rect x="831" y="249" width="1" height="2" fill="#008000"/><rect x="832" y="250" width="1" height="1" fill="#cccc00"/><rect x="833" y="248" width="1" height="3" fill="#008000"/><rect x="834" y="248" width="1" height="3" fill="#008000"/><rect x="835" y="250" width="1" height="1" fill="#008000"/><rect x="836" y="250" width="1" height="1" fill="#cccc00"/><rect x="837" y="248" width="1" height="3" fill="#008000"/><rect x="838" y="248" width="1" height="3" fill="#99ff99"/><rect x="839" y="249" width="1" height="2" fill="#ff0000"/><rect x="840" y="248" width="1" height="3" fill="#008000"/><rect x="841" y="248" width="1" height="3" fill="#99ff99"/><rect x="842" y="250" width="1" height="1" fill="#008000"/><rect x="843" y="250" width="1" height="1" fill="#008000"/><rect x="844" y="249" width="1" height="2" fill="#99ff99"/><rect x="845" y="250" width="1" height="1" fill="#99ff99"/><rect x="846" y="249" width="1" height="2" fill="#008000"/><rect x="847" y="249" width="1" height="2" fill="#008000"/><rect x="848" y="248" width="1" height="3" fill="#008000"/><rect x="849" y="250" width="1" height="1" fill="#cccc00"/><rect x="857" y="250" width="1" height="1" fill="#ff0000"/><rect x="858" y="250" width="1" height="1" fill="#ff0000"/><rect x="859" y="250" width="1" height="1" fill="#ff0000"/><rect x="860" y="250" width="1" height="1" fill="#ff0000"/><rect x="861" y="250" width="1" height="1" fill="#ff40ff"/><rect x="862" y="249" width="1" height="2" fill="#00ffff"/><rect x="863" y="248" width="1" height="3" fill="#2200cc"/><rect x="864" y="250" width="1" height="1" fill="#ff0000"/><rect x="865" y="250" width="1" height="1" fill="#ff0000"/><rect x="866" y="248" width="1" height="3" fill="#ff40ff"/><rect x="888" y="250" width="1" height="1" fill="#ff0000"/><rect x="889" y="250" width="1" height="1" fill="#ff0000"/><rect x="890" y="250" width="1" height="1" fill="#ff0000"/><rect x="891" y="248" width="1" height="3" fill="#99ff99"/><rect x="892" y="250" width="1" height="1" fill="#ff40ff"/><rect x="893" y="250" width="1" height="1" fill="#ff0000"/><rect x="895" y="248" width="1" height="3" fill="#008000"/><rect x="896" y="249" width="1" height="2" fill="#cccc00"/><rect x="897" y="250" width="1" height="1" fill="#ff0000"/><rect x="898" y="250" width="1" height="1" fill="#ff0000"/><rect x="899" y="250" width="1" height="1" fill="#008000"/><rect x="900" y="250" width="1" height="1" fill="#ff0000"/><rect x="901" y="250" width="1" height="1" fill="#ff0000"/><rect x="902" y="249" width="1" height="2" fill="#2200cc"/><rect x="903" y="249" width="1" height="2" fill="#008000"/><rect x="904" y="250" width="1" height="1" fill="#008000"/><rect x="905" y="250" width="1" height="1" fill="#ff0000"/><rect x="906" y="250" width="1" height="1" fill="#ff0000"/><rect x="907" y="250" width="1" height="1" fill="#ff0000"/><rect x="908" y="250" width="1" height="1" fill="#ff0000"/><rect x="909" y="250" width="1" height="1" fill="#ff0000"/><rect x="910" y="250" width="1" height="1" fill="#ff0000"/><rect x="911" y="248" width="1" height="3" fill="#cccc00"/><rect x="912" y="250" width="1" height="1" fill="#ff0000"/><rect x="913" y="250" width="1" height="1" fill="#99ff99"/><rect x="914" y="249" width="1" height="2" fill="#008000"/><rect x="915" y="247" width="1" height="4" fill="#996633"/><rect x="916" y="247" width="1" height="4" fill="#996633"/><rect x="917" y="247" width="1" height="4" fill="#996633"/><rect x="918" y="248" width="1" height="3" fill="#996633"/><rect x="919" y="249" width="1" height="2" fill="#996633"/><rect x="921" y="250" width="1" height="1" fill="#00ffff"/><rect x="922" y="248" width="1" height="3" fill="#008000"/><rect x="923" y="249" width="1" height="2" fill="#008000"/><rect x="924" y="249" width="1" height="2" fill="#008000"/><rect x="925" y="246" width="1" height="5" fill="#008000"/><rect x="926" y="247" width="1" height="4" fill="#008000"/><rect x="927" y="249" width="1" height="2" fill="#008000"/><rect x="928" y="247" width="1" height="4" fill="#008000"/><rect x="929" y="249" width="1" height="2" fill="#008000"/><rect x="930" y="250" width="1" height="1" fill="#ff0000"/><rect x="931" y="250" width="1" height="1" fill="#ff9999"/><rect x="932" y="250" width="1" height="1" fill="#ff0000"/><rect x="933" y="250" width="1" height="1" fill="#008000"/><rect x="934" y="250" width="1" height="1" fill="#cccc00"/><rect x="935" y="249" width="1" height="2" fill="#ff40ff"/><rect x="936" y="250" width="1" height="1" fill="#ff9999"/><rect x="972" y="249" width="1" height="2" fill="#008000"/><rect x="973" y="250" width="1" height="1" fill="#cccc00"/><rect x="974" y="250" width="1" height="1" fill="#ff0000"/><rect x="975" y="250" width="1" height="1" fill="#ff0000"/><rect x="976" y="250" width="1" height="1" fill="#ff0000"/><rect x="978" y="250" width="1" height="1" fill="#ff40ff"/><rect x="979" y="249" width="1" height="2" fill="#cccc00"/><rect x="980" y="249" width="1" height="2" fill="#ff40ff"/><rect x="981" y="250" width="1" height="1" fill="#ff0000"/><rect x="982" y="250" width="1" height="1" fill="#ff40ff"/><rect x="983" y="250" width="1" height="1" fill="#ff0000"/><rect x="984" y="250" width="1" height="1" fill="#ff0000"/><rect x="985" y="250" width="1" height="1" fill="#cccc00"/><rect x="986" y="250" width="1" height="1" fill="#008000"/><rect x="987" y="250" width="1" height="1" fill="#ff0000"/><rect x="988" y="248" width="1" height="3" fill="#ff40ff"/><rect x="989" y="250" width="1" height="1" fill="#ff9999"/><rect x="991" y="250" width="1" height="1" fill="#ff0000"/><rect x="992" y="244" width="1" height="7" fill="#996633"/><rect x="993" y="249" width="1" height="2" fill="#cccc00"/><rect x="994" y="249" width="1" height="2" fill="#cccc00"/><rect x="995" y="249" width="1" height="2" fill="#cccc00"/><rect x="996" y="250" width="1" height="1" fill="#008000"/><rect x="997" y="249" width="1" height="2" fill="#cccc00"/><rect x="998" y="249" width="1" height="2" fill="#cccc00"/><rect x="999" y="248" width="1" height="3" fill="#008000"/><rect x="1000" y="246" width="1" height="5" fill="#996633"/><rect x="1001" y="248" width="1" height="3" fill="#cccc00"/><rect x="1002" y="246" width="1" height="5" fill="#996633"/><rect x="1003" y="250" width="1" height="1" fill="#ff0000"/><rect x="1004" y="247" width="1" height="4" fill="#996633"/><rect x="1005" y="246" width="1" height="5" fill="#996633"/><rect x="1006" y="244" width="1" height="7" fill="#996633"/><rect x="1007" y="248" width="1" height="3" fill="#996633"/><rect x="1008" y="248" width="1" height="3" fill="#cccc00"/><rect x="1009" y="248" width="1" height="3" fill="#cccc00"/><rect x="1010" y="250" width="1" height="1" fill="#ff0000"/><rect x="1011" y="248" width="1" height="3" fill="#00ffff"/><rect x="1012" y="248" width="1" height="3" fill="#00ffff"/><rect x="1013" y="250" width="1" height="1" fill="#ff0000"/><rect x="1014" y="248" width="1" height="3" fill="#008000"/><rect x="1015" y="249" width="1" height="2" fill="#008000"/><rect x="1016" y="248" width="1" height="3" fill="#008000"/><rect x="1017" y="249" width="1" height="2" fill="#cccc00"/><rect x="1018" y="249" width="1" height="2" fill="#008000"/><rect x="1019" y="250" width="1" height="1" fill="#cccc00"/><rect x="1020" y="248" width="1" height="3" fill="#008000"/><rect x="1021" y="250" width="1" height="1" fill="#cccc00"/><rect x="1022" y="249" width="1" height="2" fill="#2200cc"/><rect x="1023" y="250" width="1" height="1" fill="#ff0000"/><rect x="1024" y="250" width="1" height="1" fill="#ff40ff"/><rect x="1025" y="249" width="1" height="2" fill="#ff40ff"/><rect x="1026" y="246" width="1" height="5" fill="#00ffff"/><rect x="1027" y="250" width="1" height="1" fill="#ff0000"/><rect x="1028" y="250" width="1" height="1" fill="#ff0000"/><rect x="1029" y="250" width="1" height="1" fill="#ff0000"/><rect x="1030" y="250" width="1" height="1" fill="#00ffff"/><rect x="1031" y="250" width="1" height="1" fill="#ff0000"/><rect x="1032" y="250" width="1" height="1" fill="#00ffff"/><rect x="1033" y="250" width="1" height="1" fill="#ff0000"/><rect x="1034" y="250" width="1" height="1" fill="#ff0000"/><rect x="1035" y="250" width="1" height="1" fill="#ff0000"/><rect x="1036" y="250" width="1" height="1" fill="#ff0000"/><rect x="1037" y="250" width="1" height="1" fill="#ff0000"/><rect x="1038" y="250" width="1" height="1" fill="#ff0000"/><rect x="1039" y="250" width="1" height="1" fill="#ff0000"/><rect x="1040" y="250" width="1" height="1" fill="#00ffff"/><rect x="1041" y="250" width="1" height="1" fill="#ff0000"/><rect x="1042" y="250" width="1" height="1" fill="#ff0000"/><rect x="1053" y="250" width="1" height="1" fill="#ff0000"/><rect x="1054" y="250" width="1" height="1" fill="#ff0000"/><rect x="1055" y="250" width="1" height="1" fill="#cccc00"/><rect x="1056" y="250" width="1" height="1" fill="#cccc00"/><rect x="1057" y="250" width="1" height="1" fill="#ff0000"/><rect x="1059" y="250" width="1" height="1" fill="#ff0000"/><rect x="1060" y="250" width="1" height="1" fill="#ff0000"/><rect x="1061" y="250" width="1" height="1" fill="#ff0000"/><rect x="1062" y="250" width="1" height="1" fill="#ff0000"/><rect x="1063" y="250" width="1" height="1" fill="#ff0000"/><rect x="1064" y="250" width="1" height="1" fill="#ff0000"/><rect x="1065" y="250" width="1" height="1" fill="#008000"/><rect x="1066" y="250" width="1" height="1" fill="#00ffff"/><rect x="1067" y="250" width="1" height="1" fill="#ff0000"/><rect x="1068" y="248" width="1" height="3" fill="#ff9999"/><rect x="1069" y="250" width="1" height="1" fill="#ff0000"/><rect x="1070" y="250" width="1" height="1" fill="#ff0000"/><rect x="1071" y="249" width="1" height="2" fill="#ff9999"/><rect x="1072" y="250" width="1" height="1" fill="#00ffff"/><rect x="1073" y="248" width="1" height="3" fill="#cccc00"/><rect x="1074" y="246" width="1" height="5" fill="#996633"/><rect x="1075" y="246" width="1" height="5" fill="#996633"/><rect x="1076" y="247" width="1" height="4" fill="#996633"/><rect x="1077" y="250" width="1" height="1" fill="#ff0000"/><rect x="1078" y="249" width="1" height="2" fill="#ff40ff"/><rect x="1079" y="250" width="1" height="1" fill="#ff0000"/><rect x="1080" y="249" width="1" height="2" fill="#00ffff"/><rect x="1081" y="250" width="1" height="1" fill="#ff9999"/><rect x="1082" y="248" width="1" height="3" fill="#99ff99"/><rect x="1083" y="250" width="1" height="1" fill="#00ffff"/><rect x="1084" y="250" width="1" height="1" fill="#008000"/><rect x="1085" y="248" width="1" height="3" fill="#cccc00"/><rect x="1086" y="250" width="1" height="1" fill="#ff0000"/><rect x="1087" y="250" width="1" height="1" fill="#ff0000"/><rect x="1088" y="250" width="1" height="1" fill="#008000"/><rect x="1089" y="250" width="1" height="1" fill="#008000"/><rect x="1090" y="249" width="1" height="2" fill="#008000"/><rect x="1091" y="250" width="1" height="1" fill="#ff40ff"/><rect x="1092" y="250" width="1" height="1" fill="#ff0000"/><rect x="1093" y="248" width="1" height="3" fill="#ff9999"/><rect x="1094" y="248" width="1" height="3" fill="#99ff99"/><rect x="1095" y="250" width="1" height="1" fill="#99ff99"/><rect x="1096" y="250" width="1" height="1" fill="#ff0000"/><rect x="1097" y="250" width="1" height="1" fill="#ff0000"/><rect x="1098" y="250" width="1" height="1" fill="#ff0000"/><rect x="1099" y="250" width="1" height="1" fill="#ff0000"/><rect x="1100" y="248" width="1" height="3" fill="#008000"/><rect x="1101" y="250" width="1" height="1" fill="#ff0000"/><rect x="1102" y="250" width="1" height="1" fill="#ff0000"/><rect x="1103" y="250" width="1" height="1" fill="#ff0000"/><rect x="1104" y="250" width="1" height="1" fill="#ff0000"/><rect x="1105" y="250" width="1" height="1" fill="#ff0000"/><rect x="1106" y="250" width="1" height="1" fill="#ff0000"/><rect x="1107" y="250" width="1" height="1" fill="#00ffff"/><rect x="1108" y="250" width="1" height="1" fill="#ff9999"/><rect x="1109" y="250" width="1" height="1" fill="#ff0000"/><rect x="1110" y="250" width="1" height="1" fill="#ff0000"/><rect x="1111" y="250" width="1" height="1" fill="#2200cc"/><rect x="1112" y="250" width="1" height="1" fill="#ff0000"/><rect x="1113" y="250" width="1" height="1" fill="#ff0000"/><rect x="1114" y="250" width="1" height="1" fill="#ff0000"/><rect x="1115" y="250" width="1" height="1" fill="#2200cc"/><rect x="1116" y="249" width="1" height="2" fill="#ff40ff"/><rect x="1117" y="250" width="1" height="1" fill="#008000"/><rect x="1118" y="250" width="1" height="1" fill="#ff0000"/><rect x="1119" y="250" width="1" height="1" fill="#cccc00"/><rect x="1120" y="248" width="1" height="3" fill="#008000"/><rect x="1121" y="250" width="1" height="1" fill="#ff0000"/><rect x="1122" y="250" width="1" height="1" fill="#ff0000"/><rect x="1123" y="250" width="1" height="1" fill="#ff0000"/><rect x="1124" y="249" width="1" height="2" fill="#00ffff"/><rect x="1125" y="250" width="1" height="1" fill="#ff0000"/><rect x="1126" y="249" width="1" height="2" fill="#00ffff"/><rect x="1127" y="250" width="1" height="1" fill="#ff0000"/><rect x="1128" y="250" width="1" height="1" fill="#ff40ff"/><rect x="1129" y="250" width="1" height="1" fill="#ff40ff"/><rect x="1130" y="250" width="1" height="1" fill="#ff9999"/><rect x="1131" y="249" width="1" height="2" fill="#cccc00"/><rect x="1132" y="250" width="1" height="1" fill="#ff0000"/><rect x="1133" y="248" width="1" height="3" fill="#00ffff"/><rect x="1134" y="249" width="1" height="2" fill="#ff40ff"/><rect x="1135" y="250" width="1" height="1" fill="#ff0000"/><rect x="1154" y="250" width="1" height="1" fill="#00ffff"/><rect x="1155" y="250" width="1" height="1" fill="#ff0000"/><rect x="1156" y="250" width="1" height="1" fill="#2200cc"/><rect x="1157" y="249" width="1" height="2" fill="#00ffff"/><rect x="1158" y="249" width="1" height="2" fill="#99ff99"/><rect x="1159" y="250" width="1" height="1" fill="#00ffff"/><rect x="1160" y="250" width="1" height="1" fill="#ff0000"/><rect x="1161" y="250" width="1" height="1" fill="#ff0000"/><rect x="1162" y="250" width="1" height="1" fill="#cccc00"/><rect x="1163" y="250" width="1" height="1" fill="#ff9999"/><rect x="1164" y="249" width="1" height="2" fill="#cccc00"/><rect x="1165" y="249" width="1" height="2" fill="#996633"/><rect x="1166" y="249" width="1" height="2" fill="#996633"/><rect x="1167" y="250" width="1" height="1" fill="#cccc00"/><rect x="1168" y="248" width="1" height="3" fill="#996633"/><rect x="1169" y="249" width="1" height="2" fill="#996633"/><rect x="1170" y="249" width="1" height="2" fill="#996633"/><rect x="1171" y="249" width="1" height="2" fill="#996633"/><rect x="1172" y="249" width="1" height="2" fill="#00ffff"/><rect x="1173" y="247" width="1" height="4" fill="#2200cc"/><rect x="1174" y="250" width="1" height="1" fill="#ff0000"/><rect x="1175" y="249" width="1" height="2" fill="#ff40ff"/><rect x="1176" y="250" width="1" height="1" fill="#00ffff"/><rect x="1177" y="250" width="1" height="1" fill="#00ffff"/><rect x="1178" y="248" width="1" height="3" fill="#ff40ff"/><rect x="1179" y="250" width="1" height="1" fill="#008000"/><rect x="1180" y="250" width="1" height="1" fill="#ff0000"/><rect x="1181" y="250" width="1" height="1" fill="#ff40ff"/><rect x="1182" y="248" width="1" height="3" fill="#008000"/><rect x="1183" y="247" width="1" height="4" fill="#996633"/><rect x="1184" y="246" width="1" height="5" fill="#996633"/><rect x="1185" y="249" width="1" height="2" fill="#996633"/><rect x="1186" y="248" width="1" height="3" fill="#996633"/><rect x="1187" y="250" width="1" height="1" fill="#ff0000"/><rect x="1188" y="247" width="1" height="4" fill="#996633"/><rect x="1189" y="247" width="1" height="4" fill="#996633"/><rect x="1190" y="249" width="1" height="2" fill="#996633"/><rect x="1191" y="249" width="1" height="2" fill="#996633"/><rect x="1192" y="248" width="1" height="3" fill="#996633"/><rect x="1193" y="249" width="1" height="2" fill="#996633"/><rect x="1194" y="248" width="1" height="3" fill="#996633"/><rect x="1195" y="247" width="1" height="4" fill="#996633"/><rect x="1196" y="249" width="1" height="2" fill="#008000"/><rect x="1197" y="250" width="1" height="1" fill="#2200cc"/><rect x="1198" y="250" width="1" height="1" fill="#99ff99"/><rect x="1199" y="250" width="1" height="1" fill="#ff0000"/><rect x="1200" y="250" width="1" height="1" fill="#008000"/><rect x="1201" y="246" width="1" height="5" fill="#008000"/><rect x="1202" y="250" width="1" height="1" fill="#ff0000"/><rect x="1203" y="250" width="1" height="1" fill="#008000"/><rect x="1204" y="250" width="1" height="1" fill="#008000"/><rect x="1205" y="250" width="1" height="1" fill="#008000"/><rect x="1206" y="250" width="1" height="1" fill="#008000"/><rect x="1207" y="250" width="1" height="1" fill="#cccc00"/><rect x="1208" y="250" width="1" height="1" fill="#ff0000"/><rect x="1209" y="250" width="1" height="1" fill="#ff0000"/><rect x="1210" y="250" width="1" height="1" fill="#ff0000"/><rect x="1211" y="249" width="1" height="2" fill="#cccc00"/><rect x="1212" y="249" width="1" height="2" fill="#cccc00"/><rect x="1213" y="248" width="1" height="3" fill="#cccc00"/><rect x="1214" y="249" width="1" height="2" fill="#cccc00"/><rect x="1215" y="250" width="1" height="1" fill="#ff40ff"/><rect x="1216" y="250" width="1" height="1" fill="#cccc00"/><rect x="1217" y="250" width="1" height="1" fill="#ff0000"/><rect x="1218" y="249" width="1" height="2" fill="#008000"/><rect x="1219" y="248" width="1" height="3" fill="#2200cc"/><rect x="1220" y="250" width="1" height="1" fill="#ff0000"/><rect x="1221" y="250" width="1" height="1" fill="#ff9999"/><rect x="1222" y="248" width="1" height="3" fill="#00ffff"/><rect x="1223" y="250" width="1" height="1" fill="#ff40ff"/><rect x="1224" y="248" width="1" height="3" fill="#00ffff"/><rect x="1225" y="249" width="1" height="2" fill="#00ffff"/><rect x="1226" y="250" width="1" height="1" fill="#ff0000"/><rect x="1227" y="250" width="1" height="1" fill="#008000"/><rect x="1228" y="250" width="1" height="1" fill="#ff0000"/><rect x="1229" y="250" width="1" height="1" fill="#ff0000"/><rect x="1230" y="249" width="1" height="2" fill="#00ffff"/><rect x="1231" y="250" width="1" height="1" fill="#ff0000"/><rect x="1232" y="250" width="1" height="1" fill="#ff0000"/><rect x="1269" y="250" width="1" height="1" fill="#ff0000"/><rect x="1270" y="250" width="1" height="1" fill="#ff0000"/><rect x="1271" y="250" width="1" height="1" fill="#ff0000"/><rect x="1272" y="250" width="1" height="1" fill="#ff40ff"/><rect x="1273" y="250" width="1" height="1" fill="#ff0000"/><rect x="1274" y="250" width="1" height="1" fill="#ff0000"/><rect x="1275" y="250" width="1" height="1" fill="#ff0000"/><rect x="1276" y="250" width="1" height="1" fill="#ff0000"/><rect x="1277" y="250" width="1" height="1" fill="#ff0000"/><rect x="1278" y="250" width="1" height="1" fill="#ff0000"/><rect x="1279" y="250" width="1" height="1" fill="#ff0000"/><rect x="1280" y="250" width="1" height="1" fill="#ff40ff"/><rect x="1281" y="250" width="1" height="1" fill="#ff0000"/><rect x="1282" y="250" width="1" height="1" fill="#ff0000"/><rect x="1283" y="250" width="1" height="1" fill="#ff0000"/><rect x="1284" y="250" width="1" height="1" fill="#ff0000"/><rect x="1285" y="250" width="1" height="1" fill="#99ff99"/><rect x="1286" y="250" width="1" height="1" fill="#cccc00"/><rect x="1287" y="250" width="1" height="1" fill="#ff40ff"/><rect x="1288" y="250" width="1" height="1" fill="#ff0000"/><rect x="1289" y="250" width="1" height="1" fill="#ff0000"/><rect x="1290" y="250" width="1" height="1" fill="#ff0000"/><rect x="1291" y="250" width="1" height="1" fill="#ff0000"/><rect x="1292" y="250" width="1" height="1" fill="#ff0000"/><rect x="1293" y="250" width="1" height="1" fill="#ff0000"/><rect x="1294" y="250" width="1" height="1" fill="#ff40ff"/><rect x="1295" y="250" width="1" height="1" fill="#99ff99"/><rect x="1296" y="250" width="1" height="1" fill="#00ffff"/><rect x="1297" y="250" width="1" height="1" fill="#ff0000"/><rect x="1298" y="250" width="1" height="1" fill="#ff0000"/><rect x="1299" y="250" width="1" height="1" fill="#00ffff"/><rect x="1300" y="250" width="1" height="1" fill="#ff0000"/><rect x="1301" y="250" width="1" height="1" fill="#ff40ff"/><rect x="1302" y="250" width="1" height="1" fill="#2200cc"/><rect x="1303" y="250" width="1" height="1" fill="#99ff99"/><rect x="1304" y="250" width="1" height="1" fill="#ff0000"/><rect x="1305" y="250" width="1" height="1" fill="#ff0000"/><rect x="1306" y="250" width="1" height="1" fill="#ff0000"/><rect x="1307" y="250" width="1" height="1" fill="#2200cc"/><rect x="1308" y="250" width="1" height="1" fill="#ff0000"/><rect x="1309" y="250" width="1" height="1" fill="#ff0000"/><rect x="1310" y="250" width="1" height="1" fill="#ff0000"/><rect x="1311" y="250" width="1" height="1" fill="#2200cc"/><rect x="1312" y="250" width="1" height="1" fill="#99ff99"/><rect x="1351" y="250" width="1" height="1" fill="#ff0000"/><rect x="1352" y="250" width="1" height="1" fill="#ff0000"/><rect x="1353" y="250" width="1" height="1" fill="#ff0000"/><rect x="1354" y="250" width="1" height="1" fill="#00ffff"/><rect x="1355" y="250" width="1" height="1" fill="#99ff99"/><rect x="1356" y="250" width="1" height="1" fill="#ff0000"/><rect x="1357" y="250" width="1" height="1" fill="#cccc00"/><rect x="1358" y="250" width="1" height="1" fill="#ff0000"/><rect x="1359" y="250" width="1" height="1" fill="#ff0000"/><rect x="1360" y="250" width="1" height="1" fill="#ff0000"/><rect x="1361" y="250" width="1" height="1" fill="#ff0000"/><rect x="1362" y="250" width="1" height="1" fill="#ff0000"/><rect x="1363" y="250" width="1" height="1" fill="#ff0000"/><rect x="1364" y="250" width="1" height="1" fill="#ff0000"/><rect x="1365" y="250" width="1" height="1" fill="#ff0000"/><rect x="1366" y="250" width="1" height="1" fill="#ff0000"/><rect x="1367" y="250" width="1" height="1" fill="#ff0000"/><rect x="1368" y="250" width="1" height="1" fill="#ff0000"/><rect x="1369" y="250" width="1" height="1" fill="#ff0000"/><rect x="1370" y="250" width="1" height="1" fill="#ff0000"/><rect x="1371" y="250" width="1" height="1" fill="#ff0000"/><rect x="1372" y="250" width="1" height="1" fill="#ff0000"/><rect x="1373" y="250" width="1" height="1" fill="#ff0000"/><rect x="1374" y="250" width="1" height="1" fill="#ff0000"/><rect x="1375" y="250" width="1" height="1" fill="#ff0000"/><rect x="1376" y="250" width="1" height="1" fill="#ff0000"/><rect x="1377" y="250" width="1" height="1" fill="#ff40ff"/><rect x="1378" y="250" width="1" height="1" fill="#ff0000"/><rect x="1379" y="250" width="1" height="1" fill="#ff0000"/><rect x="1380" y="250" width="1" height="1" fill="#ff40ff"/><rect x="1381" y="250" width="1" height="1" fill="#ff0000"/><rect x="1382" y="250" width="1" height="1" fill="#ff0000"/><rect x="1383" y="250" width="1" height="1" fill="#ff0000"/><rect x="1384" y="250" width="1" height="1" fill="#ff40ff"/><rect x="1385" y="250" width="1" height="1" fill="#ff0000"/><rect x="1386" y="250" width="1" height="1" fill="#cccc00"/><rect x="1387" y="250" width="1" height="1" fill="#ff0000"/><rect x="1388" y="250" width="1" height="1" fill="#ff0000"/><rect x="1389" y="250" width="1" height="1" fill="#99ff99"/><rect x="1390" y="250" width="1" height="1" fill="#ff0000"/><rect x="1391" y="250" width="1" height="1" fill="#2200cc"/><rect x="1392" y="250" width="1" height="1" fill="#ff0000"/><rect x="1393" y="250" width="1" height="1" fill="#ff0000"/><rect x="1394" y="250" width="1" height="1" fill="#ff40ff"/><rect x="1395" y="250" width="1" height="1" fill="#ff0000"/><rect x="1396" y="250" width="1" height="1" fill="#ff0000"/><rect x="1397" y="250" width="1" height="1" fill="#ff0000"/><rect x="1398" y="250" width="1" height="1" fill="#ff0000"/><rect x="1399" y="250" width="1" height="1" fill="#ff0000"/><rect x="1400" y="250" width="1" height="1" fill="#2200cc"/><rect x="1401" y="250" width="1" height="1" fill="#ff0000"/><rect x="1402" y="250" width="1" height="1" fill="#ff0000"/><rect x="1403" y="250" width="1" height="1" fill="#ff0000"/><rect x="1404" y="250" width="1" height="1" fill="#ff0000"/><rect x="1405" y="250" width="1" height="1" fill="#ff0000"/><rect x="1406" y="250" width="1" height="1" fill="#ff0000"/><rect x="1407" y="250" width="1" height="1" fill="#ff0000"/><rect x="1408" y="250" width="1" height="1" fill="#ff0000"/><rect x="1409" y="250" width="1" height="1" fill="#ff0000"/><rect x="1410" y="250" width="1" height="1" fill="#ff0000"/><rect x="1411" y="250" width="1" height="1" fill="#2200cc"/><rect x="1412" y="250" width="1" height="1" fill="#ff0000"/><rect x="1413" y="250" width="1" height="1" fill="#ff40ff"/><rect x="1414" y="250" width="1" height="1" fill="#cccc00"/><rect x="1415" y="250" width="1" height="1" fill="#ff0000"/><rect x="1416" y="250" width="1" height="1" fill="#ff0000"/><rect x="1417" y="250" width="1" height="1" fill="#ff0000"/><rect x="1418" y="250" width="1" height="1" fill="#00ffff"/><rect x="1419" y="250" width="1" height="1" fill="#00ffff"/><rect x="1420" y="250" width="1" height="1" fill="#ff40ff"/><rect x="1421" y="250" width="1" height="1" fill="#ff0000"/><rect x="1422" y="250" width="1" height="1" fill="#cccc00"/><rect x="1423" y="250" width="1" height="1" fill="#cccc00"/><rect x="1424" y="250" width="1" height="1" fill="#ff0000"/><rect x="1425" y="250" width="1" height="1" fill="#99ff99"/><rect x="1426" y="250" width="1" height="1" fill="#2200cc"/><rect x="1427" y="250" width="1" height="1" fill="#ff0000"/><rect x="1428" y="250" width="1" height="1" fill="#ff0000"/><rect x="1429" y="250" width="1" height="1" fill="#ff40ff"/><rect x="1430" y="250" width="1" height="1" fill="#ff0000"/><rect x="1431" y="250" width="1" height="1" fill="#cccc00"/><rect x="1432" y="248" width="1" height="3" fill="#996633"/><rect x="1433" y="250" width="1" height="1" fill="#008000"/><rect x="1434" y="248" width="1" height="3" fill="#996633"/><rect x="1435" y="248" width="1" height="3" fill="#996633"/><rect x="1436" y="248" width="1" height="3" fill="#996633"/><rect x="1437" y="248" width="1" height="3" fill="#cccc00"/><rect x="1438" y="246" width="1" height="5" fill="#996633"/><rect x="1439" y="248" width="1" height="3" fill="#996633"/><rect x="1440" y="249" width="1" height="2" fill="#cccc00"/><rect x="1441" y="249" width="1" height="2" fill="#00ffff"/><rect x="1442" y="249" width="1" height="2" fill="#00ffff"/><rect x="1443" y="249" width="1" height="2" fill="#ff40ff"/><rect x="1444" y="247" width="1" height="4" fill="#996633"/><rect x="1445" y="248" width="1" height="3" fill="#996633"/><rect x="1446" y="250" width="1" height="1" fill="#008000"/><rect x="1447" y="247" width="1" height="4" fill="#996633"/><rect x="1448" y="248" width="1" height="3" fill="#ff0000"/><rect x="1449" y="249" width="1" height="2" fill="#ff0000"/><rect x="1450" y="248" width="1" height="3" fill="#996633"/><rect x="1451" y="250" width="1" height="1" fill="#ff0000"/><rect x="1452" y="247" width="1" height="4" fill="#996633"/><rect x="1453" y="250" width="1" height="1" fill="#008000"/><rect x="1454" y="249" width="1" height="2" fill="#996633"/><rect x="1455" y="248" width="1" height="3" fill="#ff0000"/><rect x="1456" y="250" width="1" height="1" fill="#ff0000"/><rect x="1457" y="250" width="1" height="1" fill="#ff0000"/><rect x="1458" y="250" width="1" height="1" fill="#2200cc"/><rect x="1459" y="246" width="1" height="5" fill="#996633"/><rect x="1460" y="249" width="1" height="2" fill="#ff0000"/><rect x="1461" y="248" width="1" height="3" fill="#996633"/><rect x="1462" y="250" width="1" height="1" fill="#ff0000"/><rect x="1463" y="248" width="1" height="3" fill="#008000"/><rect x="1464" y="249" width="1" height="2" fill="#cccc00"/><rect x="1465" y="248" width="1" height="3" fill="#008000"/><rect x="1466" y="248" width="1" height="3" fill="#008000"/><rect x="1467" y="249" width="1" height="2" fill="#008000"/><rect x="1468" y="248" width="1" height="3" fill="#008000"/><rect x="1469" y="248" width="1" height="3" fill="#008000"/><rect x="1470" y="250" width="1" height="1" fill="#ff0000"/><rect x="1471" y="250" width="1" height="1" fill="#cccc00"/><rect x="1472" y="250" width="1" height="1" fill="#cccc00"/><rect x="1473" y="250" width="1" height="1" fill="#008000"/><rect x="1474" y="249" width="1" height="2" fill="#cccc00"/><rect x="1475" y="249" width="1" height="2" fill="#cccc00"/><rect x="1476" y="247" width="1" height="4" fill="#cccc00"/><rect x="1477" y="248" width="1" height="3" fill="#cccc00"/><rect x="1478" y="248" width="1" height="3" fill="#00ffff"/><rect x="1479" y="249" width="1" height="2" fill="#00ffff"/><rect x="1480" y="250" width="1" height="1" fill="#cccc00"/><rect x="1481" y="249" width="1" height="2" fill="#00ffff"/><rect x="1482" y="249" width="1" height="2" fill="#00ffff"/><rect x="1483" y="250" width="1" height="1" fill="#ff0000"/><rect x="1484" y="249" width="1" height="2" fill="#008000"/><rect x="1485" y="248" width="1" height="3" fill="#008000"/><rect x="1486" y="248" width="1" height="3" fill="#008000"/><rect x="1487" y="248" width="1" height="3" fill="#008000"/><rect x="1526" y="250" width="1" height="1" fill="#ff0000"/><rect x="1527" y="250" width="1" height="1" fill="#00ffff"/><rect x="1528" y="250" width="1" height="1" fill="#2200cc"/><rect x="1529" y="250" width="1" height="1" fill="#ff0000"/><rect x="1531" y="250" width="1" height="1" fill="#99ff99"/><rect x="1532" y="250" width="1" height="1" fill="#ff0000"/><rect x="1533" y="248" width="1" height="3" fill="#00ffff"/><rect x="1534" y="249" width="1" height="2" fill="#ff9999"/><rect x="1535" y="250" width="1" height="1" fill="#ff0000"/><rect x="1536" y="250" width="1" height="1" fill="#00ffff"/><rect x="1537" y="250" width="1" height="1" fill="#ff40ff"/><rect x="1538" y="250" width="1" height="1" fill="#ff0000"/><rect x="1540" y="250" width="1" height="1" fill="#ff0000"/><rect x="1541" y="250" width="1" height="1" fill="#00ffff"/><rect x="1542" y="250" width="1" height="1" fill="#cccc00"/><rect x="1543" y="250" width="1" height="1" fill="#ff0000"/><rect x="1544" y="250" width="1" height="1" fill="#ff0000"/><rect x="1545" y="250" width="1" height="1" fill="#00ffff"/><rect x="1546" y="250" width="1" height="1" fill="#ff0000"/><rect x="1547" y="250" width="1" height="1" fill="#ff0000"/><rect x="1548" y="250" width="1" height="1" fill="#ff0000"/><rect x="1549" y="250" width="1" height="1" fill="#ff0000"/><rect x="1550" y="250" width="1" height="1" fill="#ff0000"/><rect x="1551" y="250" width="1" height="1" fill="#ff0000"/><rect x="1552" y="250" width="1" height="1" fill="#ff0000"/><rect x="1553" y="249" width="1" height="2" fill="#cccc00"/><rect x="1554" y="247" width="1" height="4" fill="#996633"/><rect x="1555" y="246" width="1" height="5" fill="#996633"/><rect x="1556" y="247" width="1" height="4" fill="#996633"/><rect x="1557" y="244" width="1" height="7" fill="#996633"/><rect x="1558" y="250" width="1" height="1" fill="#ff0000"/><rect x="1559" y="250" width="1" height="1" fill="#ff0000"/><rect x="1560" y="250" width="1" height="1" fill="#ff0000"/><rect x="1561" y="249" width="1" height="2" fill="#ff40ff"/><rect x="1562" y="250" width="1" height="1" fill="#ff9999"/><rect x="1563" y="250" width="1" height="1" fill="#008000"/><rect x="1564" y="249" width="1" height="2" fill="#00ffff"/><rect x="1565" y="249" width="1" height="2" fill="#99ff99"/><rect x="1566" y="249" width="1" height="2" fill="#cccc00"/><rect x="1567" y="248" width="1" height="3" fill="#00ffff"/><rect x="1568" y="249" width="1" height="2" fill="#00ffff"/><rect x="1569" y="250" width="1" height="1" fill="#ff0000"/><rect x="1570" y="250" width="1" height="1" fill="#99ff99"/><rect x="1571" y="250" width="1" height="1" fill="#008000"/><rect x="1572" y="249" width="1" height="2" fill="#008000"/><rect x="1573" y="249" width="1" height="2" fill="#00ffff"/><rect x="1574" y="250" width="1" height="1" fill="#ff0000"/><rect x="1575" y="250" width="1" height="1" fill="#cccc00"/><rect x="1576" y="248" width="1" height="3" fill="#cccc00"/><rect x="1577" y="249" width="1" height="2" fill="#ff9999"/><rect x="1578" y="249" width="1" height="2" fill="#ff40ff"/><rect x="1579" y="250" width="1" height="1" fill="#cccc00"/><rect x="1580" y="250" width="1" height="1" fill="#99ff99"/><rect x="1611" y="250" width="1" height="1" fill="#ff0000"/><rect x="1612" y="250" width="1" height="1" fill="#99ff99"/><rect x="1613" y="250" width="1" height="1" fill="#ff0000"/><rect x="1614" y="250" width="1" height="1" fill="#ff0000"/><rect x="1615" y="250" width="1" height="1" fill="#ff0000"/><rect x="1616" y="250" width="1" height="1" fill="#ff40ff"/><rect x="1617" y="250" width="1" height="1" fill="#ff0000"/><rect x="1618" y="250" width="1" height="1" fill="#ff0000"/><rect x="1619" y="250" width="1" height="1" fill="#ff0000"/><rect x="1620" y="250" width="1" height="1" fill="#99ff99"/><rect x="1621" y="250" width="1" height="1" fill="#ff0000"/><rect x="1622" y="250" width="1" height="1" fill="#ff0000"/><rect x="1623" y="250" width="1" height="1" fill="#ff0000"/><rect x="1624" y="250" width="1" height="1" fill="#00ffff"/><rect x="1625" y="250" width="1" height="1" fill="#ff0000"/><rect x="1626" y="250" width="1" height="1" fill="#ff0000"/><rect x="1627" y="250" width="1" height="1" fill="#cccc00"/><rect x="1628" y="250" width="1" height="1" fill="#ff40ff"/><rect x="1629" y="250" width="1" height="1" fill="#ff0000"/><rect x="1630" y="250" width="1" height="1" fill="#008000"/><rect x="1631" y="246" width="1" height="5" fill="#996633"/><rect x="1632" y="249" width="1" height="2" fill="#2200cc"/><rect x="1633" y="249" width="1" height="2" fill="#996633"/><rect x="1634" y="249" width="1" height="2" fill="#996633"/><rect x="1635" y="249" width="1" height="2" fill="#ff0000"/><rect x="1636" y="249" width="1" height="2" fill="#996633"/><rect x="1637" y="250" width="1" height="1" fill="#ff0000"/><rect x="1642" y="249" width="1" height="2" fill="#00ffff"/><rect x="1643" y="246" width="1" height="5" fill="#996633"/><rect x="1644" y="247" width="1" height="4" fill="#996633"/><rect x="1645" y="245" width="1" height="6" fill="#996633"/><rect x="1646" y="248" width="1" height="3" fill="#996633"/><rect x="1647" y="245" width="1" height="6" fill="#996633"/><rect x="1648" y="244" width="1" height="7" fill="#996633"/><rect x="1649" y="247" width="1" height="4" fill="#996633"/><rect x="1650" y="248" width="1" height="3" fill="#996633"/><rect x="1651" y="246" width="1" height="5" fill="#996633"/><rect x="1652" y="248" width="1" height="3" fill="#996633"/><rect x="1653" y="248" width="1" height="3" fill="#996633"/><rect x="1654" y="248" width="1" height="3" fill="#996633"/><rect x="1655" y="246" width="1" height="5" fill="#996633"/><rect x="1656" y="246" width="1" height="5" fill="#996633"/><rect x="1657" y="242" width="1" height="9" fill="#996633"/><rect x="1658" y="249" width="1" height="2" fill="#cccc00"/><rect x="1659" y="247" width="1" height="4" fill="#996633"/><rect x="1660" y="246" width="1" height="5" fill="#996633"/><rect x="1661" y="248" width="1" height="3" fill="#996633"/><rect x="1662" y="250" width="1" height="1" fill="#ff0000"/><rect x="1663" y="250" width="1" height="1" fill="#ff0000"/><rect x="1664" y="250" width="1" height="1" fill="#ff0000"/><rect x="1665" y="248" width="1" height="3" fill="#00ffff"/><rect x="1666" y="247" width="1" height="4" fill="#00ffff"/><rect x="1667" y="250" width="1" height="1" fill="#cccc00"/><rect x="1668" y="248" width="1" height="3" fill="#cccc00"/><rect x="1669" y="247" width="1" height="4" fill="#00ffff"/><rect x="1670" y="247" width="1" height="4" fill="#00ffff"/><rect x="1671" y="247" width="1" height="4" fill="#00ffff"/><rect x="1672" y="250" width="1" height="1" fill="#ff0000"/><rect x="1673" y="250" width="1" height="1" fill="#ff0000"/><rect x="1674" y="250" width="1" height="1" fill="#ff0000"/><rect x="1675" y="249" width="1" height="2" fill="#008000"/><rect x="1676" y="248" width="1" height="3" fill="#99ff99"/><rect x="1677" y="248" width="1" height="3" fill="#008000"/><rect x="1678" y="249" width="1" height="2" fill="#008000"/><rect x="1679" y="248" width="1" height="3" fill="#008000"/><rect x="1680" y="249" width="1" height="2" fill="#008000"/><rect x="1681" y="249" width="1" height="2" fill="#008000"/><rect x="1682" y="248" width="1" height="3" fill="#99ff99"/><rect x="1683" y="250" width="1" height="1" fill="#008000"/><rect x="1684" y="249" width="1" height="2" fill="#99ff99"/><rect x="1685" y="250" width="1" height="1" fill="#ff0000"/><rect x="1686" y="250" width="1" height="1" fill="#cccc00"/><rect x="1687" y="250" width="1" height="1" fill="#ff0000"/><rect x="1688" y="250" width="1" height="1" fill="#ff0000"/><rect x="1689" y="250" width="1" height="1" fill="#ff0000"/><rect x="1690" y="250" width="1" height="1" fill="#ff0000"/><rect x="1691" y="250" width="1" height="1" fill="#00ffff"/><rect x="1692" y="249" width="1" height="2" fill="#00ffff"/><rect x="1693" y="250" width="1" height="1" fill="#ff0000"/><rect x="1694" y="250" width="1" height="1" fill="#008000"/><rect x="1695" y="250" width="1" height="1" fill="#ff0000"/><rect x="1696" y="249" width="1" height="2" fill="#ff9999"/><rect x="1697" y="248" width="1" height="3" fill="#00ffff"/><rect x="1698" y="250" width="1" height="1" fill="#ff0000"/><rect x="1699" y="249" width="1" height="2" fill="#00ffff"/><rect x="1700" y="250" width="1" height="1" fill="#ff0000"/><rect x="1701" y="250" width="1" height="1" fill="#ff0000"/><rect x="1702" y="250" width="1" height="1" fill="#cccc00"/><rect x="1703" y="250" width="1" height="1" fill="#ff0000"/><rect x="1704" y="250" width="1" height="1" fill="#ff0000"/><rect x="1705" y="250" width="1" height="1" fill="#ff0000"/><rect x="1706" y="250" width="1" height="1" fill="#2200cc"/><rect x="1721" y="250" width="1" height="1" fill="#ff0000"/><rect x="1722" y="250" width="1" height="1" fill="#ff0000"/><rect x="1723" y="250" width="1" height="1" fill="#ff40ff"/><rect x="1724" y="250" width="1" height="1" fill="#ff0000"/><rect x="1725" y="250" width="1" height="1" fill="#99ff99"/><rect x="1726" y="250" width="1" height="1" fill="#ff0000"/><rect x="1727" y="250" width="1" height="1" fill="#00ffff"/><rect x="1728" y="250" width="1" height="1" fill="#ff0000"/><rect x="1729" y="250" width="1" height="1" fill="#ff0000"/><rect x="1730" y="250" width="1" height="1" fill="#ff0000"/><rect x="1731" y="250" width="1" height="1" fill="#ff0000"/><rect x="1732" y="250" width="1" height="1" fill="#ff40ff"/><rect x="1733" y="250" width="1" height="1" fill="#2200cc"/><rect x="1734" y="250" width="1" height="1" fill="#ff0000"/><rect x="1735" y="250" width="1" height="1" fill="#ff0000"/><rect x="1736" y="250" width="1" height="1" fill="#ff40ff"/><rect x="1737" y="250" width="1" height="1" fill="#99ff99"/><rect x="1738" y="250" width="1" height="1" fill="#ff0000"/><rect x="1739" y="250" width="1" height="1" fill="#99ff99"/><rect x="1740" y="250" width="1" height="1" fill="#ff0000"/><rect x="1741" y="250" width="1" height="1" fill="#ff0000"/><rect x="1742" y="250" width="1" height="1" fill="#ff0000"/><rect x="1743" y="250" width="1" height="1" fill="#99ff99"/><rect x="1744" y="250" width="1" height="1" fill="#ff0000"/><rect x="1745" y="249" width="1" height="2" fill="#cccc00"/><rect x="1746" y="249" width="1" height="2" fill="#cccc00"/><rect x="1747" y="246" width="1" height="5" fill="#cccc00"/><rect x="1748" y="250" width="1" height="1" fill="#008000"/><rect x="1749" y="243" width="1" height="8" fill="#996633"/><rect x="1750" y="243" width="1" height="8" fill="#996633"/><rect x="1751" y="248" width="1" height="3" fill="#996633"/><rect x="1752" y="248" width="1" height="3" fill="#cccc00"/><rect x="1753" y="248" width="1" height="3" fill="#996633"/><rect x="1754" y="248" width="1" height="3" fill="#cccc00"/><rect x="1755" y="247" width="1" height="4" fill="#996633"/><rect x="1756" y="246" width="1" height="5" fill="#996633"/><rect x="1757" y="245" width="1" height="6" fill="#996633"/><rect x="1758" y="247" width="1" height="4" fill="#996633"/><rect x="1759" y="246" width="1" height="5" fill="#996633"/><rect x="1760" y="248" width="1" height="3" fill="#cccc00"/><rect x="1761" y="245" width="1" height="6" fill="#996633"/><rect x="1762" y="245" width="1" height="6" fill="#996633"/><rect x="1763" y="250" width="1" height="1" fill="#008000"/><rect x="1764" y="245" width="1" height="6" fill="#996633"/><rect x="1765" y="248" width="1" height="3" fill="#99ff99"/><rect x="1766" y="249" width="1" height="2" fill="#2200cc"/><rect x="1767" y="247" width="1" height="4" fill="#996633"/><rect x="1768" y="248" width="1" height="3" fill="#cccc00"/><rect x="1769" y="248" width="1" height="3" fill="#996633"/><rect x="1770" y="245" width="1" height="6" fill="#996633"/><rect x="1771" y="247" width="1" height="4" fill="#996633"/><rect x="1772" y="247" width="1" height="4" fill="#996633"/><rect x="1773" y="245" width="1" height="6" fill="#996633"/><rect x="1774" y="241" width="1" height="10" fill="#996633"/><rect x="1775" y="246" width="1" height="5" fill="#996633"/><rect x="1776" y="246" width="1" height="5" fill="#996633"/><rect x="1777" y="245" width="1" height="6" fill="#996633"/><rect x="1778" y="250" width="1" height="1" fill="#ff0000"/><rect x="1779" y="250" width="1" height="1" fill="#ff0000"/><rect x="1780" y="249" width="1" height="2" fill="#00ffff"/><rect x="1781" y="249" width="1" height="2" fill="#00ffff"/><rect x="1782" y="248" width="1" height="3" fill="#00ffff"/><rect x="1783" y="248" width="1" height="3" fill="#00ffff"/><rect x="1784" y="248" width="1" height="3" fill="#00ffff"/><rect x="1785" y="250" width="1" height="1" fill="#ff0000"/><rect x="1786" y="250" width="1" height="1" fill="#ff0000"/><rect x="1787" y="250" width="1" height="1" fill="#ff0000"/><rect x="1788" y="249" width="1" height="2" fill="#008000"/><rect x="1789" y="250" width="1" height="1" fill="#ff0000"/><rect x="1790" y="250" width="1" height="1" fill="#ff0000"/><rect x="1791" y="249" width="1" height="2" fill="#00ffff"/><rect x="1792" y="250" width="1" height="1" fill="#ff0000"/><rect x="1793" y="249" width="1" height="2" fill="#ff0000"/><rect x="1794" y="248" width="1" height="3" fill="#008000"/><rect x="1795" y="248" width="1" height="3" fill="#008000"/><rect x="1796" y="248" width="1" height="3" fill="#ff0000"/><rect x="1797" y="247" width="1" height="4" fill="#008000"/><rect x="1798" y="250" width="1" height="1" fill="#cccc00"/><rect x="1799" y="247" width="1" height="4" fill="#008000"/><rect x="1800" y="250" width="1" height="1" fill="#00ffff"/><rect x="1801" y="250" width="1" height="1" fill="#ff0000"/><rect x="1802" y="249" width="1" height="2" fill="#008000"/><rect x="1803" y="250" width="1" height="1" fill="#99ff99"/><rect x="1804" y="249" width="1" height="2" fill="#ff0000"/><rect x="1805" y="249" width="1" height="2" fill="#008000"/><rect x="1806" y="249" width="1" height="2" fill="#008000"/><rect x="1807" y="249" width="1" height="2" fill="#008000"/><rect x="1808" y="249" width="1" height="2" fill="#008000"/><rect x="1809" y="249" width="1" height="2" fill="#008000"/><rect x="1810" y="249" width="1" height="2" fill="#cccc00"/><rect x="1811" y="250" width="1" height="1" fill="#ff0000"/><rect x="1812" y="250" width="1" height="1" fill="#ff0000"/><rect x="1813" y="250" width="1" height="1" fill="#ff0000"/><rect x="1814" y="249" width="1" height="2" fill="#ff40ff"/><rect x="1815" y="250" width="1" height="1" fill="#ff0000"/><rect x="1816" y="249" width="1" height="2" fill="#cccc00"/><rect x="1817" y="250" width="1" height="1" fill="#99ff99"/><rect x="360" y="282" width="1432" height="1" fill="#996633"/><rect x="360" y="263" width="1" height="19" fill="#000"/><rect x="523" y="263" width="3" height="19" fill="#000"/><rect x="528" y="263" width="2" height="19" fill="#000"/><rect x="687" y="263" width="1" height="19" fill="#000"/><rect x="692" y="263" width="1" height="19" fill="#000"/><rect x="695" y="263" width="1" height="19" fill="#000"/><rect x="789" y="263" width="3" height="19" fill="#000"/><rect x="824" y="263" width="3" height="19" fill="#000"/><rect x="909" y="263" width="2" height="19" fill="#000"/><rect x="1011" y="263" width="2" height="19" fill="#000"/><rect x="1113" y="263" width="1" height="19" fill="#000"/><rect x="1116" y="263" width="1" height="19" fill="#000"/><rect x="1222" y="263" width="1" height="19" fill="#000"/><rect x="1224" y="263" width="2" height="19" fill="#000"/><rect x="1283" y="263" width="1" height="19" fill="#000"/><rect x="1440" y="263" width="2" height="19" fill="#000"/><rect x="1443" y="263" width="1" height="19" fill="#000"/><rect x="1479" y="263" width="2" height="19" fill="#000"/><rect x="1483" y="263" width="1" height="19" fill="#000"/><rect x="1665" y="263" width="2" height="19" fill="#000"/><rect x="1669" y="263" width="1" height="19" fill="#000"/><rect x="1672" y="263" width="2" height="19" fill="#000"/><rect x="1779" y="263" width="6" height="19" fill="#000"/><rect x="1787" y="263" width="1" height="19" fill="#000"/><rect x="1791" y="263" width="1" height="19" fill="#000"/><rect x="523" y="281" width="2" height="2" fill="#00ffff"/><rect x="1672" y="281" width="2" height="2" fill="#00ffff"/><rect x="360" y="314" width="1430" height="1" fill="#996633"/><rect x="360" y="295" width="1" height="19" fill="#000"/><rect x="460" y="295" width="1" height="19" fill="#000"/><rect x="522" y="295" width="4" height="19" fill="#000"/><rect x="528" y="295" width="1" height="19" fill="#000"/><rect x="687" y="295" width="2" height="19" fill="#000"/><rect x="695" y="295" width="1" height="19" fill="#000"/><rect x="789" y="295" width="1" height="19" fill="#000"/><rect x="820" y="295" width="5" height="19" fill="#000"/><rect x="826" y="295" width="1" height="19" fill="#000"/><rect x="910" y="295" width="1" height="19" fill="#000"/><rect x="1010" y="295" width="4" height="19" fill="#000"/><rect x="1108" y="295" width="1" height="19" fill="#000"/><rect x="1110" y="295" width="2" height="19" fill="#000"/><rect x="1113" y="295" width="1" height="19" fill="#000"/><rect x="1116" y="295" width="1" height="19" fill="#000"/><rect x="1185" y="295" width="1" height="19" fill="#000"/><rect x="1223" y="295" width="1" height="19" fill="#000"/><rect x="1227" y="295" width="1" height="19" fill="#000"/><rect x="1440" y="295" width="1" height="19" fill="#000"/><rect x="1442" y="295" width="1" height="19" fill="#000"/><rect x="1478" y="295" width="1" height="19" fill="#000"/><rect x="1480" y="295" width="2" height="19" fill="#000"/><rect x="1483" y="295" width="1" height="19" fill="#000"/><rect x="1666" y="295" width="4" height="19" fill="#000"/><rect x="1672" y="295" width="1" height="19" fill="#000"/><rect x="1743" y="295" width="1" height="19" fill="#000"/><rect x="1747" y="295" width="1" height="19" fill="#000"/><rect x="1779" y="295" width="3" height="19" fill="#000"/><rect x="1784" y="295" width="3" height="19" fill="#000"/><rect x="1788" y="295" width="2" height="19" fill="#000"/><rect x="522" y="313" width="2" height="2" fill="#00ffff"/><rect x="687" y="313" width="2" height="2" fill="#00ffff"/><rect x="1110" y="313" width="2" height="2" fill="#00ffff"/><rect x="1779" y="313" width="2" height="2" fill="#00ffff"/><rect x="1788" y="313" width="2" height="2" fill="#00ffff"/><rect x="360" y="346" width="1430" height="1" fill="#996633"/><rect x="360" y="327" width="1" height="19" fill="#000"/><rect x="522" y="327" width="1" height="19" fill="#000"/><rect x="524" y="327" width="1" height="19" fill="#000"/><rect x="526" y="327" width="1" height="19" fill="#000"/><rect x="528" y="327" width="3" height="19" fill="#000"/><rect x="687" y="327" width="1" height="19" fill="#000"/><rect x="692" y="327" width="1" height="19" fill="#000"/><rect x="694" y="327" width="3" height="19" fill="#000"/><rect x="790" y="327" width="1" height="19" fill="#000"/><rect x="822" y="327" width="1" height="19" fill="#000"/><rect x="824" y="327" width="1" height="19" fill="#000"/><rect x="826" y="327" width="1" height="19" fill="#000"/><rect x="910" y="327" width="1" height="19" fill="#000"/><rect x="913" y="327" width="1" height="19" fill="#000"/><rect x="1011" y="327" width="2" height="19" fill="#000"/><rect x="1108" y="327" width="1" height="19" fill="#000"/><rect x="1110" y="327" width="1" height="19" fill="#000"/><rect x="1113" y="327" width="2" height="19" fill="#000"/><rect x="1116" y="327" width="1" height="19" fill="#000"/><rect x="1170" y="327" width="1" height="19" fill="#000"/><rect x="1224" y="327" width="1" height="19" fill="#000"/><rect x="1226" y="327" width="1" height="19" fill="#000"/><rect x="1440" y="327" width="1" height="19" fill="#000"/><rect x="1481" y="327" width="1" height="19" fill="#000"/><rect x="1666" y="327" width="1" height="19" fill="#000"/><rect x="1668" y="327" width="1" height="19" fill="#000"/><rect x="1670" y="327" width="3" height="19" fill="#000"/><rect x="1743" y="327" width="1" height="19" fill="#000"/><rect x="1745" y="327" width="1" height="19" fill="#000"/><rect x="1781" y="327" width="4" height="19" fill="#000"/><rect x="1786" y="327" width="4" height="19" fill="#000"/><rect x="1670" y="345" width="2" height="2" fill="#00ffff"/><rect x="1781" y="345" width="2" height="2" fill="#00ffff"/><rect x="360" y="378" width="1430" height="1" fill="#996633"/><rect x="360" y="359" width="1" height="19" fill="#000"/><rect x="460" y="359" width="1" height="19" fill="#000"/><rect x="523" y="359" width="2" height="19" fill="#000"/><rect x="527" y="359" width="1" height="19" fill="#000"/><rect x="530" y="359" width="1" height="19" fill="#000"/><rect x="694" y="359" width="3" height="19" fill="#000"/><rect x="824" y="359" width="2" height="19" fill="#000"/><rect x="909" y="359" width="1" height="19" fill="#000"/><rect x="911" y="359" width="1" height="19" fill="#000"/><rect x="1011" y="359" width="3" height="19" fill="#000"/><rect x="1113" y="359" width="1" height="19" fill="#000"/><rect x="1116" y="359" width="1" height="19" fill="#000"/><rect x="1220" y="359" width="2" height="19" fill="#000"/><rect x="1224" y="359" width="2" height="19" fill="#000"/><rect x="1227" y="359" width="1" height="19" fill="#000"/><rect x="1440" y="359" width="1" height="19" fill="#000"/><rect x="1478" y="359" width="3" height="19" fill="#000"/><rect x="1482" y="359" width="1" height="19" fill="#000"/><rect x="1665" y="359" width="4" height="19" fill="#000"/><rect x="1672" y="359" width="1" height="19" fill="#000"/><rect x="1742" y="359" width="3" height="19" fill="#000"/><rect x="1779" y="359" width="3" height="19" fill="#000"/><rect x="1787" y="359" width="1" height="19" fill="#000"/><rect x="1789" y="359" width="1" height="19" fill="#000"/><rect x="523" y="377" width="2" height="2" fill="#00ffff"/><rect x="694" y="377" width="2" height="2" fill="#00ffff"/><rect x="360" y="410" width="1429" height="1" fill="#996633"/><rect x="360" y="391" width="1" height="19" fill="#000"/><rect x="461" y="391" width="1" height="19" fill="#000"/><rect x="523" y="391" width="3" height="19" fill="#000"/><rect x="528" y="391" width="1" height="19" fill="#000"/><rect x="687" y="391" width="6" height="19" fill="#000"/><rect x="695" y="391" width="1" height="19" fill="#000"/><rect x="789" y="391" width="2" height="19" fill="#000"/><rect x="821" y="391" width="4" height="19" fill="#000"/><rect x="826" y="391" width="1" height="19" fill="#000"/><rect x="910" y="391" width="1" height="19" fill="#000"/><rect x="1010" y="391" width="2" height="19" fill="#000"/><rect x="1013" y="391" width="1" height="19" fill="#000"/><rect x="1108" y="391" width="2" height="19" fill="#000"/><rect x="1113" y="391" width="1" height="19" fill="#000"/><rect x="1116" y="391" width="1" height="19" fill="#000"/><rect x="1170" y="391" width="1" height="19" fill="#000"/><rect x="1223" y="391" width="2" height="19" fill="#000"/><rect x="1226" y="391" width="1" height="19" fill="#000"/><rect x="1440" y="391" width="1" height="19" fill="#000"/><rect x="1442" y="391" width="1" height="19" fill="#000"/><rect x="1479" y="391" width="2" height="19" fill="#000"/><rect x="1482" y="391" width="1" height="19" fill="#000"/><rect x="1667" y="391" width="1" height="19" fill="#000"/><rect x="1669" y="391" width="1" height="19" fill="#000"/><rect x="1671" y="391" width="2" height="19" fill="#000"/><rect x="1674" y="391" width="1" height="19" fill="#000"/><rect x="1744" y="391" width="1" height="19" fill="#000"/><rect x="1780" y="391" width="2" height="19" fill="#000"/><rect x="1784" y="391" width="1" height="19" fill="#000"/><rect x="1787" y="391" width="2" height="19" fill="#000"/><rect x="687" y="409" width="2" height="2" fill="#00ffff"/><rect x="789" y="409" width="2" height="2" fill="#00ffff"/><rect x="1479" y="409" width="2" height="2" fill="#00ffff"/><rect x="1671" y="409" width="2" height="2" fill="#00ffff"/><rect x="360" y="442" width="1285" height="1" fill="#996633"/><rect x="360" y="423" width="1" height="19" fill="#000"/><rect x="439" y="423" width="1" height="19" fill="#000"/><rect x="571" y="423" width="1" height="19" fill="#000"/><rect x="922" y="423" width="1" height="19" fill="#000"/><rect x="1103" y="423" width="1" height="19" fill="#000"/><rect x="1179" y="423" width="1" height="19" fill="#000"/><rect x="606" y="423" width="2" height="19" fill="#000"/><rect x="1222" y="423" width="2" height="19" fill="#000"/><rect x="1527" y="423" width="2" height="19" fill="#000"/><rect x="1642" y="423" width="3" height="19" fill="#000"/><rect x="1527" y="423" width="1" height="19" fill="#996633"/><rect x="1528" y="442" width="1" height="1" fill="#ff40ff"/><rect x="1643" y="435" width="1" height="8" fill="#ff9999"/><rect x="1642" y="442" width="1" height="1" fill="#008000"/><rect x="607" y="442" width="1" height="1" fill="#ff40ff"/><rect x="922" y="442" width="1" height="1" fill="#ff0000"/><rect x="1103" y="442" width="1" height="1" fill="#008000"/><rect x="1223" y="442" width="1" height="1" fill="#ff40ff"/><rect x="360" y="474" width="1283" height="1" fill="#990000"/><rect x="360" y="455" width="1" height="19" fill="#000"/><rect x="606" y="455" width="1" height="19" fill="#000"/><rect x="922" y="455" width="1" height="19" fill="#000"/><rect x="1103" y="455" width="1" height="19" fill="#000"/><rect x="1642" y="455" width="1" height="19" fill="#000"/><rect x="1222" y="455" width="2" height="19" fill="#000"/><rect x="360" y="506" width="1283" height="1" fill="#990000"/><rect x="360" y="487" width="1" height="20" fill="#990000"/><rect x="438" y="487" width="2" height="19" fill="#000"/><rect x="475" y="487" width="4" height="19" fill="#000"/><rect x="494" y="487" width="2" height="19" fill="#000"/><rect x="512" y="487" width="2" height="19" fill="#000"/><rect x="549" y="487" width="3" height="19" fill="#000"/><rect x="570" y="487" width="2" height="19" fill="#000"/><rect x="577" y="487" width="2" height="19" fill="#000"/><rect x="586" y="487" width="2" height="19" fill="#000"/><rect x="597" y="487" width="2" height="19" fill="#000"/><rect x="604" y="487" width="4" height="19" fill="#000"/><rect x="920" y="487" width="4" height="19" fill="#000"/><rect x="1101" y="487" width="3" height="19" fill="#000"/><rect x="1178" y="487" width="2" height="19" fill="#000"/><rect x="1221" y="487" width="3" height="19" fill="#000"/><rect x="1456" y="487" width="2" height="19" fill="#000"/><rect x="1527" y="487" width="2" height="19" fill="#000"/><rect x="1611" y="487" width="3" height="19" fill="#000"/><rect x="1635" y="487" width="3" height="19" fill="#000"/><rect x="1639" y="487" width="4" height="19" fill="#000"/><rect x="438" y="499" width="1" height="8" fill="#990000"/><rect x="475" y="495" width="3" height="12" fill="#990000"/><rect x="494" y="499" width="1" height="8" fill="#990000"/><rect x="512" y="499" width="1" height="8" fill="#990000"/><rect x="549" y="499" width="2" height="8" fill="#990000"/><rect x="570" y="499" width="1" height="8" fill="#990000"/><rect x="577" y="499" width="1" height="8" fill="#990000"/><rect x="586" y="499" width="1" height="8" fill="#990000"/><rect x="597" y="499" width="1" height="8" fill="#990000"/><rect x="604" y="495" width="3" height="12" fill="#990000"/><rect x="920" y="495" width="3" height="12" fill="#990000"/><rect x="1101" y="499" width="2" height="8" fill="#990000"/><rect x="1178" y="499" width="1" height="8" fill="#990000"/><rect x="1221" y="499" width="2" height="8" fill="#990000"/><rect x="1456" y="499" width="1" height="8" fill="#990000"/><rect x="1527" y="499" width="1" height="8" fill="#990000"/><rect x="1611" y="499" width="2" height="8" fill="#990000"/><rect x="1635" y="499" width="2" height="8" fill="#990000"/><rect x="1639" y="495" width="3" height="12" fill="#990000"/><rect x="1635" y="487" width="2" height="20" fill="#990000"/><rect x="1639" y="487" width="3" height="20" fill="#990000"/><rect x="360" y="538" width="211" height="1" fill="#990000"/><rect x="571" y="538" width="304" height="1" fill="#ff9999"/><rect x="875" y="538" width="347" height="1" fill="#990000"/><rect x="1222" y="538" width="307" height="1" fill="#ff9999"/><rect x="360" y="519" width="1" height="19" fill="#000"/><rect x="571" y="519" width="1" height="19" fill="#000"/><rect x="875" y="519" width="1" height="19" fill="#000"/><rect x="1528" y="519" width="1" height="19" fill="#000"/><rect x="1222" y="519" width="2" height="19" fill="#000"/><rect x="360" y="551" width="1" height="5" fill="#000"/><rect x="425" y="551" width="4" height="5" fill="#000"/><rect x="437" y="551" width="1" height="5" fill="#000"/><rect x="1086" y="160" width="1" height="396" fill="#808080"/></svg>
<svg style="left:1881px;top:199px" width="9" height="7" viewBox="0 0 9 7" ><path d="M0.800 5.200L4.500 1.500L8.200 5.200" fill="none" stroke="#505050" stroke-width="1.700"/></svg>
<svg style="left:1881px;top:544px" width="9" height="7" viewBox="0 0 9 7" ><path d="M0.800 1.300L4.500 5L8.200 1.300" fill="none" stroke="#505050" stroke-width="1.700"/></svg>
<div id="labclip" style="left:0;top:0;width:1920px;height:556px;overflow:hidden"><span class="t lab" style="top:200px;right:1586.01px;letter-spacing:-0.010px;">[31917] FinalizerWatchdogDaemon</span>
<span class="t lab" style="top:232px;right:1586.01px;letter-spacing:-0.014px;">[31903] main</span>
<span class="t lab" style="top:264px;right:1586.02px;letter-spacing:-0.024px;">[32104] AsyncTask #1</span>
<span class="t lab" style="top:296px;right:1586.02px;letter-spacing:-0.024px;">[32107] AsyncTask #3</span>
<span class="t lab" style="top:328px;right:1586.02px;letter-spacing:-0.024px;">[32105] AsyncTask #2</span>
<span class="t lab" style="top:360px;right:1585.93px;letter-spacing:0.073px;">[32111] AsyncTask #5</span>
<span class="t lab" style="top:392px;right:1586.02px;letter-spacing:-0.024px;">[32108] AsyncTask #4</span>
<span class="t lab" style="top:424px;right:1586.10px;letter-spacing:-0.098px;">[31916] FinalizerDaemon</span>
<span class="t lab" style="top:456px;right:1586.11px;letter-spacing:-0.112px;">[31915] ReferenceQueueDaemon</span>
<span class="t lab" style="top:488px;right:1586.16px;letter-spacing:-0.164px;">[31919] GCDaemon</span>
<span class="t lab" style="top:520px;right:1585.96px;letter-spacing:0.036px;">[31918] HeapTrimmerDaemon</span>
<span class="t lab" style="top:552px;right:1585.78px;letter-spacing:0.223px;">[31945] pool-2-thread-1</span></div>
<span class="t" style="top:104px;left:351px;letter-spacing:-0.275px;">msec: 12,109.63</span>
<span class="t" style="top:121px;left:371px;letter-spacing:-0.110px;">168 java.lang.Object.wait ()V</span>
<span class="t" style="top:139px;left:371px;letter-spacing:-0.151px;">excl cpu msec: 19.313, incl cpu msec: 19.313, excl real msec: 19.313, incl real msec: 2,955.121</span>
<span class="t" style="top:104px;left:1602px;letter-spacing:-0.034px;">max msec: 24,400 (real time, dual clock)</span>
<span class="t" style="top:171px;left:349px;letter-spacing:-0.234px;">0</span>
<span class="t" style="top:171px;left:410px;letter-spacing:-0.509px;">1,000</span>
<span class="t" style="top:171px;left:471px;letter-spacing:-0.509px;">2,000</span>
<span class="t" style="top:171px;left:532px;letter-spacing:-0.509px;">3,000</span>
<span class="t" style="top:171px;left:593px;letter-spacing:-0.509px;">4,000</span>
<span class="t" style="top:171px;left:653px;letter-spacing:-0.509px;">5,000</span>
<span class="t" style="top:171px;left:714px;letter-spacing:-0.509px;">6,000</span>
<span class="t" style="top:171px;left:775px;letter-spacing:-0.509px;">7,000</span>
<span class="t" style="top:171px;left:836px;letter-spacing:-0.509px;">8,000</span>
<span class="t" style="top:171px;left:897px;letter-spacing:-0.509px;">9,000</span>
<span class="t" style="top:171px;left:958px;letter-spacing:-0.461px;">10,000</span>
<span class="t" style="top:171px;left:1019px;letter-spacing:-0.299px;">11,000</span>
<span class="t" style="top:171px;left:1080px;letter-spacing:-0.461px;">12,000</span>
<span class="t" style="top:171px;left:1141px;letter-spacing:-0.461px;">13,000</span>
<span class="t" style="top:171px;left:1201px;letter-spacing:-0.461px;">14,000</span>
<span class="t" style="top:171px;left:1262px;letter-spacing:-0.461px;">15,000</span>
<span class="t" style="top:171px;left:1323px;letter-spacing:-0.461px;">16,000</span>
<span class="t" style="top:171px;left:1384px;letter-spacing:-0.461px;">17,000</span>
<span class="t" style="top:171px;left:1445px;letter-spacing:-0.461px;">18,000</span>
<span class="t" style="top:171px;left:1506px;letter-spacing:-0.461px;">19,000</span>
<span class="t" style="top:171px;left:1567px;letter-spacing:-0.461px;">20,000</span>
<span class="t" style="top:171px;left:1628px;letter-spacing:-0.461px;">21,000</span>
<span class="t" style="top:171px;left:1689px;letter-spacing:-0.461px;">22,000</span>
<span class="t" style="top:171px;left:1749px;letter-spacing:-0.461px;">23,000</span>
<span class="t" style="top:171px;left:1810px;letter-spacing:-0.461px;">24,000</span>
</section>
<section id="profile" aria-label="traceview profile table">
<div style="left:24px;top:556px;width:1872px;height:460px;background:#fff;"></div>
<div style="left:26px;top:556px;width:1868px;height:458px;background:#808080;"></div>
<div style="left:31px;top:564px;width:1858px;height:407px;background:#fff;"></div>
<div style="left:1873px;top:564px;width:16px;height:407px;background:#f0f0f0;"></div>
<div style="left:1873px;top:584px;width:15px;height:17px;background:#cdcdcd;"></div>
<div style="left:69px;top:982px;width:1815px;height:21px;background:#fff;"></div>
<div style="left:400px;top:564px;width:1px;height:23px;background:#e5e5e5;"></div>
<div style="left:500px;top:564px;width:1px;height:23px;background:#e5e5e5;"></div>
<div style="left:600px;top:564px;width:1px;height:23px;background:#e5e5e5;"></div>
<div style="left:700px;top:564px;width:1px;height:23px;background:#e5e5e5;"></div>
<div style="left:800px;top:564px;width:1px;height:23px;background:#e5e5e5;"></div>
<div style="left:900px;top:564px;width:1px;height:23px;background:#e5e5e5;"></div>
<div style="left:1000px;top:564px;width:1px;height:23px;background:#e5e5e5;"></div>
<div style="left:1100px;top:564px;width:1px;height:23px;background:#e5e5e5;"></div>
<div style="left:1200px;top:564px;width:1px;height:23px;background:#e5e5e5;"></div>
<div style="left:1300px;top:564px;width:1px;height:23px;background:#e5e5e5;"></div>
<div style="left:1400px;top:564px;width:1px;height:23px;background:#e5e5e5;"></div>
<div style="left:1500px;top:564px;width:1px;height:23px;background:#e5e5e5;"></div>
<svg style="left:35px;top:595px" width="6" height="8" viewBox="0 0 6 8"><path d="M1.200 1 L4.200 3.700 L1.200 6.400" fill="none" stroke="#9a9a9a" stroke-width="1"/></svg>
<div style="left:53px;top:591px;width:8px;height:14px;background:#cccc00;"></div>
<svg style="left:35px;top:615px" width="6" height="8" viewBox="0 0 6 8"><path d="M1.200 1 L4.200 3.700 L1.200 6.400" fill="none" stroke="#9a9a9a" stroke-width="1"/></svg>
<div style="left:53px;top:611px;width:8px;height:14px;background:#2200cc;"></div>
<svg style="left:35px;top:635px" width="6" height="8" viewBox="0 0 6 8"><path d="M1.200 1 L4.200 3.700 L1.200 6.400" fill="none" stroke="#9a9a9a" stroke-width="1"/></svg>
<div style="left:53px;top:631px;width:8px;height:14px;background:#99ff99;"></div>
<svg style="left:35px;top:655px" width="6" height="8" viewBox="0 0 6 8"><path d="M1.200 1 L4.200 3.700 L1.200 6.400" fill="none" stroke="#9a9a9a" stroke-width="1"/></svg>
<div style="left:53px;top:651px;width:8px;height:14px;background:#990000;"></div>
<svg style="left:35px;top:675px" width="6" height="8" viewBox="0 0 6 8"><path d="M1.200 1 L4.200 3.700 L1.200 6.400" fill="none" stroke="#9a9a9a" stroke-width="1"/></svg>
<div style="left:53px;top:671px;width:8px;height:14px;background:#209090;"></div>
<svg style="left:35px;top:695px" width="6" height="8" viewBox="0 0 6 8"><path d="M1.200 1 L4.200 3.700 L1.200 6.400" fill="none" stroke="#9a9a9a" stroke-width="1"/></svg>
<div style="left:53px;top:691px;width:8px;height:14px;background:#ccccff;"></div>
<svg style="left:35px;top:715px" width="6" height="8" viewBox="0 0 6 8"><path d="M1.200 1 L4.200 3.700 L1.200 6.400" fill="none" stroke="#9a9a9a" stroke-width="1"/></svg>
<div style="left:53px;top:711px;width:8px;height:14px;background:#008000;"></div>
<svg style="left:35px;top:735px" width="6" height="8" viewBox="0 0 6 8"><path d="M1.200 1 L4.200 3.700 L1.200 6.400" fill="none" stroke="#9a9a9a" stroke-width="1"/></svg>
<div style="left:53px;top:731px;width:8px;height:14px;background:#ff9999;"></div>
<svg style="left:35px;top:755px" width="6" height="8" viewBox="0 0 6 8"><path d="M1.200 1 L4.200 3.700 L1.200 6.400" fill="none" stroke="#9a9a9a" stroke-width="1"/></svg>
<div style="left:53px;top:751px;width:8px;height:14px;background:#884488;"></div>
<svg style="left:35px;top:775px" width="6" height="8" viewBox="0 0 6 8"><path d="M1.200 1 L4.200 3.700 L1.200 6.400" fill="none" stroke="#9a9a9a" stroke-width="1"/></svg>
<div style="left:53px;top:771px;width:8px;height:14px;background:#996633;"></div>
<svg style="left:35px;top:795px" width="6" height="8" viewBox="0 0 6 8"><path d="M1.200 1 L4.200 3.700 L1.200 6.400" fill="none" stroke="#9a9a9a" stroke-width="1"/></svg>
<div style="left:53px;top:791px;width:8px;height:14px;background:#444444;"></div>
<svg style="left:35px;top:815px" width="6" height="8" viewBox="0 0 6 8"><path d="M1.200 1 L4.200 3.700 L1.200 6.400" fill="none" stroke="#9a9a9a" stroke-width="1"/></svg>
<div style="left:53px;top:811px;width:8px;height:14px;background:#6060ff;"></div>
<svg style="left:35px;top:835px" width="6" height="8" viewBox="0 0 6 8"><path d="M1.200 1 L4.200 3.700 L1.200 6.400" fill="none" stroke="#9a9a9a" stroke-width="1"/></svg>
<div style="left:53px;top:831px;width:8px;height:14px;background:#00e000;"></div>
<svg style="left:35px;top:855px" width="6" height="8" viewBox="0 0 6 8"><path d="M1.200 1 L4.200 3.700 L1.200 6.400" fill="none" stroke="#9a9a9a" stroke-width="1"/></svg>
<div style="left:53px;top:851px;width:8px;height:14px;background:#ff0000;"></div>
<svg style="left:35px;top:875px" width="6" height="8" viewBox="0 0 6 8"><path d="M1.200 1 L4.200 3.700 L1.200 6.400" fill="none" stroke="#9a9a9a" stroke-width="1"/></svg>
<div style="left:53px;top:871px;width:8px;height:14px;background:#00ffff;"></div>
<svg style="left:35px;top:895px" width="6" height="8" viewBox="0 0 6 8"><path d="M1.200 1 L4.200 3.700 L1.200 6.400" fill="none" stroke="#9a9a9a" stroke-width="1"/></svg>
<div style="left:53px;top:891px;width:8px;height:14px;background:#ff44ff;"></div>
<svg style="left:35px;top:915px" width="6" height="8" viewBox="0 0 6 8"><path d="M1.200 1 L4.200 3.700 L1.200 6.400" fill="none" stroke="#9a9a9a" stroke-width="1"/></svg>
<div style="left:53px;top:911px;width:8px;height:14px;background:#cccc00;"></div>
<svg style="left:35px;top:935px" width="6" height="8" viewBox="0 0 6 8"><path d="M1.200 1 L4.200 3.700 L1.200 6.400" fill="none" stroke="#9a9a9a" stroke-width="1"/></svg>
<div style="left:53px;top:931px;width:8px;height:14px;background:#2200cc;"></div>
<svg style="left:35px;top:955px" width="6" height="8" viewBox="0 0 6 8"><path d="M1.200 1 L4.200 3.700 L1.200 6.400" fill="none" stroke="#9a9a9a" stroke-width="1"/></svg>
<div style="left:53px;top:951px;width:8px;height:14px;background:#99ff99;"></div>
<svg style="left:1876px;top:570px" width="9" height="7" viewBox="0 0 9 7" ><path d="M0.800 5.200L4.500 1.500L8.200 5.200" fill="none" stroke="#505050" stroke-width="1.700"/></svg>
<svg style="left:1876px;top:958px" width="9" height="7" viewBox="0 0 9 7" ><path d="M0.800 1.300L4.500 5L8.200 1.300" fill="none" stroke="#505050" stroke-width="1.700"/></svg>
<span class="t" style="top:985px;left:36px;letter-spacing:-0.381px;">Find:</span>
<span class="t" style="top:568px;left:37px;letter-spacing:0.078px;">Name</span>
<span class="t" style="top:568px;right:1425.14px;letter-spacing:-0.145px;">Incl Cpu Time...</span>
<span class="t" style="top:568px;right:1325.04px;letter-spacing:-0.037px;">Incl Cpu Time</span>
<span class="t" style="top:568px;right:1225.29px;letter-spacing:-0.295px;">Excl Cpu Tim...</span>
<span class="t" style="top:568px;right:1125.22px;letter-spacing:-0.216px;">Excl Cpu Time</span>
<span class="t" style="top:568px;right:1025.19px;letter-spacing:-0.186px;">Incl Real Tim...</span>
<span class="t" style="top:568px;right:925.10px;letter-spacing:-0.098px;">Incl Real Time</span>
<span class="t" style="top:568px;right:825.33px;letter-spacing:-0.331px;">Excl Real Tim...</span>
<span class="t" style="top:568px;right:725.26px;letter-spacing:-0.265px;">Excl Real Time</span>
<span class="t" style="top:568px;right:626.36px;letter-spacing:-0.359px;">Calls+RecurC...</span>
<span class="t" style="top:568px;right:525.05px;letter-spacing:-0.049px;">Cpu Time/Call</span>
<span class="t" style="top:568px;right:425.11px;letter-spacing:-0.109px;">Real Time/Call</span>
<span class="t" style="top:590px;left:66px;letter-spacing:0.008px;width:334px;overflow:hidden;">21 android.widget.FrameLayout.onMeasure (II)V</span>
<span class="t" style="top:590px;right:1422.49px;letter-spacing:-0.495px;">61.5%</span>
<span class="t" style="top:590px;right:1322.30px;letter-spacing:-0.304px;">6075.062</span>
<span class="t" style="top:590px;right:1222.56px;letter-spacing:-0.560px;">0.0%</span>
<span class="t" style="top:590px;right:1122.35px;letter-spacing:-0.349px;">0.000</span>
<span class="t" style="top:590px;right:1022.56px;letter-spacing:-0.560px;">3.5%</span>
<span class="t" style="top:590px;right:922.30px;letter-spacing:-0.304px;">8759.404</span>
<span class="t" style="top:590px;right:822.56px;letter-spacing:-0.560px;">0.0%</span>
<span class="t" style="top:590px;right:722.35px;letter-spacing:-0.349px;">0.000</span>
<span class="t" style="top:590px;left:1052px;width:400px;text-align:center;text-indent:-0.04px;letter-spacing:-0.042px;">30+237</span>
<span class="t" style="top:590px;right:522.33px;letter-spacing:-0.328px;">22.753</span>
<span class="t" style="top:590px;right:422.33px;letter-spacing:-0.328px;">32.807</span>
<span class="t" style="top:610px;left:66px;width:334px;overflow:hidden;">22 android.support.v4.view.ViewPager.onMeasure (II)V</span>
<span class="t" style="top:610px;right:1422.49px;letter-spacing:-0.495px;">61.3%</span>
<span class="t" style="top:610px;right:1322.30px;letter-spacing:-0.304px;">6051.266</span>
<span class="t" style="top:610px;right:1222.56px;letter-spacing:-0.560px;">0.0%</span>
<span class="t" style="top:610px;right:1122.35px;letter-spacing:-0.349px;">0.000</span>
<span class="t" style="top:610px;right:1022.56px;letter-spacing:-0.560px;">3.5%</span>
<span class="t" style="top:610px;right:922.30px;letter-spacing:-0.304px;">8823.543</span>
<span class="t" style="top:610px;right:822.56px;letter-spacing:-0.560px;">0.0%</span>
<span class="t" style="top:610px;right:722.35px;letter-spacing:-0.349px;">0.000</span>
<span class="t" style="top:610px;left:1052px;width:400px;text-align:center;text-indent:0.05px;letter-spacing:0.051px;">26+0</span>
<span class="t" style="top:610px;right:522.31px;letter-spacing:-0.314px;">232.741</span>
<span class="t" style="top:610px;right:422.31px;letter-spacing:-0.314px;">339.367</span>
<span class="t" style="top:630px;left:66px;width:334px;overflow:hidden;">23 android.widget.RelativeLayout.onMeasure (II)V</span>
<span class="t" style="top:630px;right:1422.49px;letter-spacing:-0.495px;">53.3%</span>
<span class="t" style="top:630px;right:1322.30px;letter-spacing:-0.304px;">5269.852</span>
<span class="t" style="top:630px;right:1222.56px;letter-spacing:-0.560px;">0.0%</span>
<span class="t" style="top:630px;right:1122.35px;letter-spacing:-0.349px;">0.000</span>
<span class="t" style="top:630px;right:1022.56px;letter-spacing:-0.560px;">3.1%</span>
<span class="t" style="top:630px;right:922.30px;letter-spacing:-0.304px;">7640.434</span>
<span class="t" style="top:630px;right:822.56px;letter-spacing:-0.560px;">0.0%</span>
<span class="t" style="top:630px;right:722.35px;letter-spacing:-0.349px;">0.000</span>
<span class="t" style="top:630px;left:1052px;width:400px;text-align:center;text-indent:-0.04px;letter-spacing:-0.042px;">48+123</span>
<span class="t" style="top:630px;right:522.33px;letter-spacing:-0.328px;">30.818</span>
<span class="t" style="top:630px;right:422.33px;letter-spacing:-0.328px;">44.681</span>
<span class="t" style="top:650px;left:66px;letter-spacing:0.008px;width:334px;overflow:hidden;">24 android.view.ViewRootImpl.measureHierarchy (Landroid/view/View;Landroid/view/WindowManager$LayoutParams;Landroid/content/res/Resources;II)Z</span>
<span class="t" style="top:650px;right:1422.49px;letter-spacing:-0.495px;">52.8%</span>
<span class="t" style="top:650px;right:1322.30px;letter-spacing:-0.304px;">5212.579</span>
<span class="t" style="top:650px;right:1222.56px;letter-spacing:-0.560px;">0.0%</span>
<span class="t" style="top:650px;right:1122.35px;letter-spacing:-0.349px;">0.000</span>
<span class="t" style="top:650px;right:1022.56px;letter-spacing:-0.560px;">3.0%</span>
<span class="t" style="top:650px;right:922.30px;letter-spacing:-0.304px;">7564.040</span>
<span class="t" style="top:650px;right:822.56px;letter-spacing:-0.560px;">0.0%</span>
<span class="t" style="top:650px;right:722.35px;letter-spacing:-0.349px;">0.000</span>
<span class="t" style="top:650px;left:1052px;width:400px;text-align:center;text-indent:0.05px;letter-spacing:0.051px;">15+0</span>
<span class="t" style="top:650px;right:522.31px;letter-spacing:-0.314px;">347.505</span>
<span class="t" style="top:650px;right:422.31px;letter-spacing:-0.314px;">504.269</span>
<span class="t" style="top:670px;left:66px;letter-spacing:0.101px;width:334px;overflow:hidden;">25 android.view.ViewRootImpl.performMeasure (II)V</span>
<span class="t" style="top:670px;right:1422.49px;letter-spacing:-0.495px;">52.8%</span>
<span class="t" style="top:670px;right:1322.30px;letter-spacing:-0.304px;">5212.579</span>
<span class="t" style="top:670px;right:1222.56px;letter-spacing:-0.560px;">0.0%</span>
<span class="t" style="top:670px;right:1122.35px;letter-spacing:-0.349px;">0.000</span>
<span class="t" style="top:670px;right:1022.56px;letter-spacing:-0.560px;">3.0%</span>
<span class="t" style="top:670px;right:922.30px;letter-spacing:-0.304px;">7564.040</span>
<span class="t" style="top:670px;right:822.56px;letter-spacing:-0.560px;">0.0%</span>
<span class="t" style="top:670px;right:722.35px;letter-spacing:-0.349px;">0.000</span>
<span class="t" style="top:670px;left:1052px;width:400px;text-align:center;text-indent:0.05px;letter-spacing:0.051px;">15+0</span>
<span class="t" style="top:670px;right:522.31px;letter-spacing:-0.314px;">347.505</span>
<span class="t" style="top:670px;right:422.31px;letter-spacing:-0.314px;">504.269</span>
<span class="t" style="top:690px;left:66px;letter-spacing:-0.029px;width:334px;overflow:hidden;">26 com.android.internal.policy.impl.PhoneWindow$DecorView.onMeasure (II)V</span>
<span class="t" style="top:690px;right:1422.49px;letter-spacing:-0.495px;">52.7%</span>
<span class="t" style="top:690px;right:1322.30px;letter-spacing:-0.304px;">5210.320</span>
<span class="t" style="top:690px;right:1222.56px;letter-spacing:-0.560px;">0.0%</span>
<span class="t" style="top:690px;right:1122.35px;letter-spacing:-0.349px;">0.000</span>
<span class="t" style="top:690px;right:1022.56px;letter-spacing:-0.560px;">3.0%</span>
<span class="t" style="top:690px;right:922.30px;letter-spacing:-0.304px;">7560.744</span>
<span class="t" style="top:690px;right:822.56px;letter-spacing:-0.560px;">0.0%</span>
<span class="t" style="top:690px;right:722.35px;letter-spacing:-0.349px;">0.000</span>
<span class="t" style="top:690px;left:1052px;width:400px;text-align:center;text-indent:0.05px;letter-spacing:0.051px;">15+0</span>
<span class="t" style="top:690px;right:522.31px;letter-spacing:-0.314px;">347.355</span>
<span class="t" style="top:690px;right:422.31px;letter-spacing:-0.314px;">504.050</span>
<span class="t" style="top:710px;left:66px;letter-spacing:-0.020px;width:334px;overflow:hidden;">27 android.widget.RelativeLayout.measureChildHorizontal (Landroid/view/View;Landroid/widget/RelativeLayout$LayoutParams;II)V</span>
<span class="t" style="top:710px;right:1422.49px;letter-spacing:-0.495px;">46.2%</span>
<span class="t" style="top:710px;right:1322.30px;letter-spacing:-0.304px;">4560.985</span>
<span class="t" style="top:710px;right:1222.56px;letter-spacing:-0.560px;">0.0%</span>
<span class="t" style="top:710px;right:1122.35px;letter-spacing:-0.349px;">0.000</span>
<span class="t" style="top:710px;right:1022.56px;letter-spacing:-0.560px;">2.6%</span>
<span class="t" style="top:710px;right:922.30px;letter-spacing:-0.304px;">6575.573</span>
<span class="t" style="top:710px;right:822.56px;letter-spacing:-0.560px;">0.0%</span>
<span class="t" style="top:710px;right:722.35px;letter-spacing:-0.349px;">0.000</span>
<span class="t" style="top:710px;left:1052px;width:400px;text-align:center;text-indent:-0.00px;">69+75</span>
<span class="t" style="top:710px;right:522.33px;letter-spacing:-0.328px;">31.674</span>
<span class="t" style="top:710px;right:422.33px;letter-spacing:-0.328px;">45.664</span>
<span class="t" style="top:730px;left:66px;letter-spacing:0.035px;width:334px;overflow:hidden;">28 android.support.v4.view.ViewPager.populate (I)V</span>
<span class="t" style="top:730px;right:1422.49px;letter-spacing:-0.495px;">35.8%</span>
<span class="t" style="top:730px;right:1322.30px;letter-spacing:-0.304px;">3532.314</span>
<span class="t" style="top:730px;right:1222.56px;letter-spacing:-0.560px;">0.0%</span>
<span class="t" style="top:730px;right:1122.35px;letter-spacing:-0.349px;">0.000</span>
<span class="t" style="top:730px;right:1022.56px;letter-spacing:-0.560px;">2.1%</span>
<span class="t" style="top:730px;right:922.30px;letter-spacing:-0.304px;">5293.481</span>
<span class="t" style="top:730px;right:822.56px;letter-spacing:-0.560px;">0.0%</span>
<span class="t" style="top:730px;right:722.35px;letter-spacing:-0.349px;">0.000</span>
<span class="t" style="top:730px;left:1052px;width:400px;text-align:center;text-indent:0.05px;letter-spacing:0.051px;">13+0</span>
<span class="t" style="top:730px;right:522.31px;letter-spacing:-0.314px;">271.716</span>
<span class="t" style="top:730px;right:422.31px;letter-spacing:-0.314px;">407.191</span>
<span class="t" style="top:750px;left:66px;letter-spacing:0.028px;width:334px;overflow:hidden;">29 android.support.v4.view.ViewPager.populate ()V</span>
<span class="t" style="top:750px;right:1422.49px;letter-spacing:-0.495px;">35.7%</span>
<span class="t" style="top:750px;right:1322.30px;letter-spacing:-0.304px;">3531.382</span>
<span class="t" style="top:750px;right:1222.56px;letter-spacing:-0.560px;">0.0%</span>
<span class="t" style="top:750px;right:1122.35px;letter-spacing:-0.349px;">0.000</span>
<span class="t" style="top:750px;right:1022.56px;letter-spacing:-0.560px;">2.1%</span>
<span class="t" style="top:750px;right:922.30px;letter-spacing:-0.304px;">5292.001</span>
<span class="t" style="top:750px;right:822.56px;letter-spacing:-0.560px;">0.0%</span>
<span class="t" style="top:750px;right:722.35px;letter-spacing:-0.349px;">0.000</span>
<span class="t" style="top:750px;left:1052px;width:400px;text-align:center;text-indent:0.05px;letter-spacing:0.051px;">12+0</span>
<span class="t" style="top:750px;right:522.31px;letter-spacing:-0.314px;">294.282</span>
<span class="t" style="top:750px;right:422.31px;letter-spacing:-0.314px;">441.000</span>
<span class="t" style="top:770px;left:66px;letter-spacing:0.017px;width:334px;overflow:hidden;">30 android.support.v4.app.FragmentManagerImpl.execPendingActions ()Z</span>
<span class="t" style="top:770px;right:1422.49px;letter-spacing:-0.495px;">35.7%</span>
<span class="t" style="top:770px;right:1322.30px;letter-spacing:-0.304px;">3527.998</span>
<span class="t" style="top:770px;right:1222.56px;letter-spacing:-0.560px;">0.0%</span>
<span class="t" style="top:770px;right:1122.35px;letter-spacing:-0.349px;">0.000</span>
<span class="t" style="top:770px;right:1022.56px;letter-spacing:-0.560px;">2.1%</span>
<span class="t" style="top:770px;right:922.30px;letter-spacing:-0.304px;">5287.102</span>
<span class="t" style="top:770px;right:822.56px;letter-spacing:-0.560px;">0.0%</span>
<span class="t" style="top:770px;right:722.35px;letter-spacing:-0.349px;">0.000</span>
<span class="t" style="top:770px;left:1052px;width:400px;text-align:center;text-indent:0.05px;letter-spacing:0.051px;">12+0</span>
<span class="t" style="top:770px;right:522.31px;letter-spacing:-0.314px;">294.000</span>
<span class="t" style="top:770px;right:422.31px;letter-spacing:-0.314px;">440.592</span>
<span class="t" style="top:790px;left:66px;letter-spacing:0.056px;width:334px;overflow:hidden;">31 android.support.v4.app.FragmentManagerImpl.executePendingTransactions ()Z</span>
<span class="t" style="top:790px;right:1422.49px;letter-spacing:-0.495px;">35.7%</span>
<span class="t" style="top:790px;right:1322.30px;letter-spacing:-0.304px;">3527.998</span>
<span class="t" style="top:790px;right:1222.56px;letter-spacing:-0.560px;">0.0%</span>
<span class="t" style="top:790px;right:1122.35px;letter-spacing:-0.349px;">0.000</span>
<span class="t" style="top:790px;right:1022.56px;letter-spacing:-0.560px;">2.1%</span>
<span class="t" style="top:790px;right:922.30px;letter-spacing:-0.304px;">5287.102</span>
<span class="t" style="top:790px;right:822.56px;letter-spacing:-0.560px;">0.0%</span>
<span class="t" style="top:790px;right:722.35px;letter-spacing:-0.349px;">0.000</span>
<span class="t" style="top:790px;left:1052px;width:400px;text-align:center;text-indent:0.05px;letter-spacing:0.051px;">12+0</span>
<span class="t" style="top:790px;right:522.31px;letter-spacing:-0.314px;">294.000</span>
<span class="t" style="top:790px;right:422.31px;letter-spacing:-0.314px;">440.592</span>
<span class="t" style="top:810px;left:66px;letter-spacing:0.034px;width:334px;overflow:hidden;">32 android.support.v4.app.FragmentPagerAdapter.finishUpdate (Landroid/view/ViewGroup;)V</span>
<span class="t" style="top:810px;right:1422.49px;letter-spacing:-0.495px;">35.7%</span>
<span class="t" style="top:810px;right:1322.30px;letter-spacing:-0.304px;">3527.998</span>
<span class="t" style="top:810px;right:1222.56px;letter-spacing:-0.560px;">0.0%</span>
<span class="t" style="top:810px;right:1122.35px;letter-spacing:-0.349px;">0.000</span>
<span class="t" style="top:810px;right:1022.56px;letter-spacing:-0.560px;">2.1%</span>
<span class="t" style="top:810px;right:922.30px;letter-spacing:-0.304px;">5287.102</span>
<span class="t" style="top:810px;right:822.56px;letter-spacing:-0.560px;">0.0%</span>
<span class="t" style="top:810px;right:722.35px;letter-spacing:-0.349px;">0.000</span>
<span class="t" style="top:810px;left:1052px;width:400px;text-align:center;text-indent:0.05px;letter-spacing:0.051px;">12+0</span>
<span class="t" style="top:810px;right:522.31px;letter-spacing:-0.314px;">294.000</span>
<span class="t" style="top:810px;right:422.31px;letter-spacing:-0.314px;">440.592</span>
<span class="t" style="top:830px;left:66px;letter-spacing:0.078px;width:334px;overflow:hidden;">33 android.support.v4.app.FragmentManagerImpl.moveToState (Landroid/support/v4/app/Fragment;IIIZ)V</span>
<span class="t" style="top:830px;right:1422.49px;letter-spacing:-0.495px;">35.7%</span>
<span class="t" style="top:830px;right:1322.30px;letter-spacing:-0.304px;">3524.143</span>
<span class="t" style="top:830px;right:1222.56px;letter-spacing:-0.560px;">0.0%</span>
<span class="t" style="top:830px;right:1122.35px;letter-spacing:-0.349px;">0.000</span>
<span class="t" style="top:830px;right:1022.56px;letter-spacing:-0.560px;">2.1%</span>
<span class="t" style="top:830px;right:922.30px;letter-spacing:-0.304px;">5278.513</span>
<span class="t" style="top:830px;right:822.56px;letter-spacing:-0.560px;">0.0%</span>
<span class="t" style="top:830px;right:722.35px;letter-spacing:-0.349px;">0.000</span>
<span class="t" style="top:830px;left:1052px;width:400px;text-align:center;text-indent:0.05px;letter-spacing:0.051px;">29+0</span>
<span class="t" style="top:830px;right:522.31px;letter-spacing:-0.314px;">121.522</span>
<span class="t" style="top:830px;right:422.31px;letter-spacing:-0.314px;">182.018</span>
<span class="t" style="top:850px;left:66px;letter-spacing:-0.007px;width:334px;overflow:hidden;">34 android.support.v4.app.BackStackRecord.run ()V</span>
<span class="t" style="top:850px;right:1422.49px;letter-spacing:-0.495px;">32.4%</span>
<span class="t" style="top:850px;right:1322.30px;letter-spacing:-0.304px;">3198.367</span>
<span class="t" style="top:850px;right:1222.56px;letter-spacing:-0.560px;">0.0%</span>
<span class="t" style="top:850px;right:1122.35px;letter-spacing:-0.349px;">0.000</span>
<span class="t" style="top:850px;right:1022.56px;letter-spacing:-0.560px;">1.9%</span>
<span class="t" style="top:850px;right:922.30px;letter-spacing:-0.304px;">4776.349</span>
<span class="t" style="top:850px;right:822.56px;letter-spacing:-0.560px;">0.0%</span>
<span class="t" style="top:850px;right:722.35px;letter-spacing:-0.349px;">0.000</span>
<span class="t" style="top:850px;left:1052px;width:400px;text-align:center;text-indent:0.05px;letter-spacing:0.051px;">12+0</span>
<span class="t" style="top:850px;right:522.31px;letter-spacing:-0.314px;">266.531</span>
<span class="t" style="top:850px;right:422.31px;letter-spacing:-0.314px;">398.029</span>
<span class="t" style="top:870px;left:66px;letter-spacing:0.050px;width:334px;overflow:hidden;">35 android.widget.ScrollView.onMeasure (II)V</span>
<span class="t" style="top:870px;right:1422.49px;letter-spacing:-0.495px;">30.2%</span>
<span class="t" style="top:870px;right:1322.30px;letter-spacing:-0.304px;">2986.943</span>
<span class="t" style="top:870px;right:1222.56px;letter-spacing:-0.560px;">0.0%</span>
<span class="t" style="top:870px;right:1122.35px;letter-spacing:-0.349px;">0.000</span>
<span class="t" style="top:870px;right:1022.56px;letter-spacing:-0.560px;">1.7%</span>
<span class="t" style="top:870px;right:922.30px;letter-spacing:-0.304px;">4202.310</span>
<span class="t" style="top:870px;right:822.56px;letter-spacing:-0.560px;">0.0%</span>
<span class="t" style="top:870px;right:722.35px;letter-spacing:-0.349px;">0.000</span>
<span class="t" style="top:870px;left:1052px;width:400px;text-align:center;text-indent:0.05px;letter-spacing:0.051px;">45+0</span>
<span class="t" style="top:870px;right:522.33px;letter-spacing:-0.328px;">66.377</span>
<span class="t" style="top:870px;right:422.33px;letter-spacing:-0.328px;">93.385</span>
<span class="t" style="top:890px;left:66px;letter-spacing:0.019px;width:334px;overflow:hidden;">36 android.widget.ScrollView.measureChildWithMargins (Landroid/view/View;IIII)V</span>
<span class="t" style="top:890px;right:1422.49px;letter-spacing:-0.495px;">29.9%</span>
<span class="t" style="top:890px;right:1322.30px;letter-spacing:-0.304px;">2951.826</span>
<span class="t" style="top:890px;right:1222.56px;letter-spacing:-0.560px;">0.0%</span>
<span class="t" style="top:890px;right:1122.35px;letter-spacing:-0.349px;">0.000</span>
<span class="t" style="top:890px;right:1022.56px;letter-spacing:-0.560px;">1.7%</span>
<span class="t" style="top:890px;right:922.30px;letter-spacing:-0.304px;">4153.657</span>
<span class="t" style="top:890px;right:822.56px;letter-spacing:-0.560px;">0.0%</span>
<span class="t" style="top:890px;right:722.35px;letter-spacing:-0.349px;">0.000</span>
<span class="t" style="top:890px;left:1052px;width:400px;text-align:center;text-indent:0.05px;letter-spacing:0.051px;">44+0</span>
<span class="t" style="top:890px;right:522.33px;letter-spacing:-0.328px;">67.087</span>
<span class="t" style="top:890px;right:422.33px;letter-spacing:-0.328px;">94.401</span>
<span class="t" style="top:910px;left:66px;letter-spacing:0.023px;width:334px;overflow:hidden;">37 android.view.LayoutInflater.inflate (ILandroid/view/ViewGroup;Z)Landroid/view/View;</span>
<span class="t" style="top:910px;right:1422.49px;letter-spacing:-0.495px;">28.5%</span>
<span class="t" style="top:910px;right:1322.30px;letter-spacing:-0.304px;">2818.464</span>
<span class="t" style="top:910px;right:1222.56px;letter-spacing:-0.560px;">0.0%</span>
<span class="t" style="top:910px;right:1122.35px;letter-spacing:-0.349px;">0.000</span>
<span class="t" style="top:910px;right:1022.56px;letter-spacing:-0.560px;">1.6%</span>
<span class="t" style="top:910px;right:922.30px;letter-spacing:-0.304px;">3976.699</span>
<span class="t" style="top:910px;right:822.56px;letter-spacing:-0.560px;">0.0%</span>
<span class="t" style="top:910px;right:722.35px;letter-spacing:-0.349px;">0.000</span>
<span class="t" style="top:910px;left:1052px;width:400px;text-align:center;text-indent:-0.00px;">42+55</span>
<span class="t" style="top:910px;right:522.33px;letter-spacing:-0.328px;">29.056</span>
<span class="t" style="top:910px;right:422.33px;letter-spacing:-0.328px;">40.997</span>
<span class="t" style="top:930px;left:66px;letter-spacing:0.090px;width:334px;overflow:hidden;">38 android.view.LayoutInflater.inflate (Lorg/xmlpull/v1/XmlPullParser;Landroid/view/ViewGroup;Z)Landroid/view/View;</span>
<span class="t" style="top:930px;right:1422.49px;letter-spacing:-0.495px;">28.3%</span>
<span class="t" style="top:930px;right:1322.30px;letter-spacing:-0.304px;">2794.176</span>
<span class="t" style="top:930px;right:1222.56px;letter-spacing:-0.560px;">0.0%</span>
<span class="t" style="top:930px;right:1122.35px;letter-spacing:-0.349px;">0.000</span>
<span class="t" style="top:930px;right:1022.56px;letter-spacing:-0.560px;">1.6%</span>
<span class="t" style="top:930px;right:922.30px;letter-spacing:-0.304px;">3934.084</span>
<span class="t" style="top:930px;right:822.56px;letter-spacing:-0.560px;">0.0%</span>
<span class="t" style="top:930px;right:722.35px;letter-spacing:-0.349px;">0.000</span>
<span class="t" style="top:930px;left:1052px;width:400px;text-align:center;text-indent:-0.00px;">42+55</span>
<span class="t" style="top:930px;right:522.33px;letter-spacing:-0.328px;">28.806</span>
<span class="t" style="top:930px;right:422.33px;letter-spacing:-0.328px;">40.558</span>
<span class="t" style="top:950px;left:66px;letter-spacing:0.103px;width:334px;overflow:hidden;">39 android.view.LayoutInflater.rInflate (Lorg/xmlpull/v1/XmlPullParser;Landroid/view/View;Landroid/util/AttributeSet;Z)V</span>
<span class="t" style="top:950px;right:1422.49px;letter-spacing:-0.495px;">27.9%</span>
<span class="t" style="top:950px;right:1322.30px;letter-spacing:-0.304px;">2751.637</span>
<span class="t" style="top:950px;right:1222.56px;letter-spacing:-0.560px;">0.0%</span>
<span class="t" style="top:950px;right:1122.35px;letter-spacing:-0.349px;">0.000</span>
<span class="t" style="top:950px;right:1022.56px;letter-spacing:-0.560px;">1.6%</span>
<span class="t" style="top:950px;right:922.30px;letter-spacing:-0.304px;">3876.058</span>
<span class="t" style="top:950px;right:822.56px;letter-spacing:-0.560px;">0.0%</span>
<span class="t" style="top:950px;right:722.35px;letter-spacing:-0.349px;">0.000</span>
<span class="t" style="top:950px;left:1052px;width:400px;text-align:center;text-indent:-0.04px;letter-spacing:-0.042px;">33+568</span>
<span class="t" style="top:950px;right:522.35px;letter-spacing:-0.349px;">4.578</span>
<span class="t" style="top:950px;right:422.35px;letter-spacing:-0.349px;">6.449</span>
</section>
<section id="statusbar" aria-label="status bar">
<div style="left:1761px;top:1017px;width:144px;height:22px;background:#f0f0f0;border:1px solid #a6a6a6;box-sizing:border-box;border-bottom:none;"></div>
<div style="left:1762px;top:1018px;width:47px;height:21px;background:#ffffe1;"></div>
<div style="left:1809px;top:1018px;width:1px;height:21px;background:#9a9a9a;"></div>
<svg style="left:1905px;top:1019px" width="13" height="16" viewBox="0 0 13 16" ><path d="M2 4.500H11L10.300 14.500Q10.200 15.300 9.400 15.300H3.600Q2.800 15.300 2.700 14.500Z" fill="#4b9ae0" stroke="#1f62b0" stroke-width="0.900"/><path d="M4.300 6V14M6.500 6V14M8.700 6V14" stroke="#b9e08f" stroke-width="1"/><path d="M0.800 3.600H12.200" stroke="#1f62b0" stroke-width="1.600"/><path d="M4.500 2.800V1.500H8.500V2.800" fill="none" stroke="#1f62b0" stroke-width="1.100"/></svg>
<span class="t" style="top:1020px;left:1792px;letter-spacing:0.158px;">190M of 570M</span>
</section>
<section id="taskbar" aria-label="taskbar">
<div style="left:0px;top:1040px;width:1920px;height:8px;background:#05070a;"></div>
<div style="left:48px;top:1040px;width:344px;height:8px;background:#333333;"></div>
<div style="left:1080px;top:1040px;width:48px;height:8px;background:#2b2b2b;"></div>
<div style="left:1915px;top:1040px;width:1px;height:8px;background:#6a6a6a;"></div>

<span class="t" style="top:1044px;left:1815px;letter-spacing:-0.309px;color:#fff;">17:04</span>
</section>
</div></body></html>
